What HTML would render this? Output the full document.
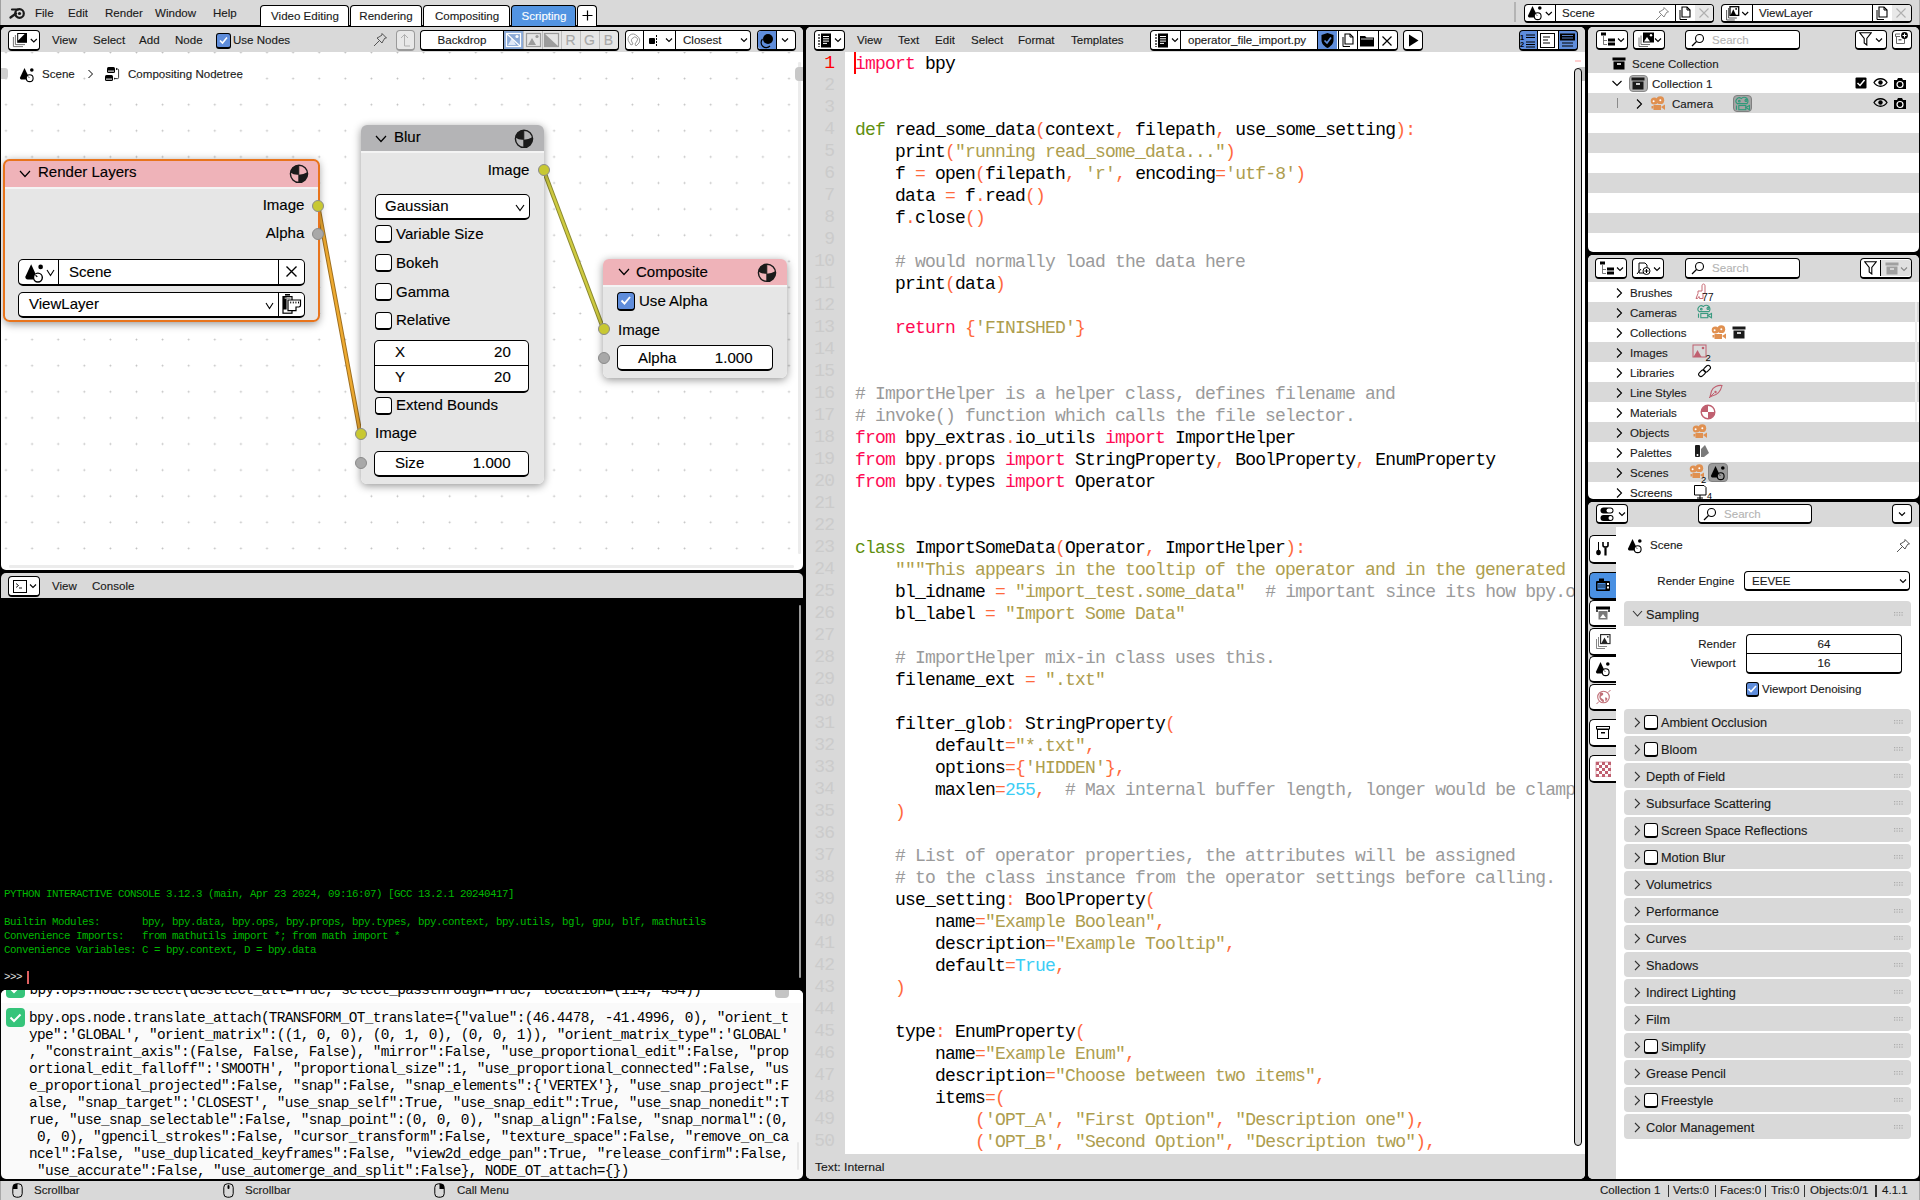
<!DOCTYPE html><html><head><meta charset="utf-8"><style>
html,body{margin:0;padding:0;}
body{width:1920px;height:1200px;position:relative;overflow:hidden;background:#000;font-family:"Liberation Sans",sans-serif;}
</style></head><body>
<div style="position:absolute;left:0px;top:0px;width:1920px;height:25px;background:#d9d9d9;"></div>
<div style="position:absolute;left:0px;top:1181px;width:1920px;height:19px;background:#d9d9d9;"></div>
<div style="position:absolute;left:0px;top:0px;width:1px;height:25px;background:#a0a0a0;"></div>
<svg style="position:absolute;left:9px;top:5px;" width="17" height="15" viewBox="0 0 17 15"><g fill="none" stroke="#1a1a1a" stroke-width="2.2"><circle cx="10.5" cy="8.5" r="4.3"/></g><circle cx="10.5" cy="8.5" r="1.6" fill="#1a1a1a"/><path d="M1.5 12.5 L7 8.5 M3 4.5 L9 4.5" stroke="#1a1a1a" stroke-width="2.2" stroke-linecap="round"/></svg>
<div style="position:absolute;left:35.4px;transform-origin:0 0;transform:scaleX(1.05);top:7.69px;font:11.0px/11.0px 'Liberation Sans',sans-serif;color:#1a1a1a;white-space:pre;-webkit-text-stroke:0.12px #1a1a1a;">File</div>
<div style="position:absolute;left:68.4px;transform-origin:0 0;transform:scaleX(1.05);top:7.69px;font:11.0px/11.0px 'Liberation Sans',sans-serif;color:#1a1a1a;white-space:pre;-webkit-text-stroke:0.12px #1a1a1a;">Edit</div>
<div style="position:absolute;left:104.6px;transform-origin:0 0;transform:scaleX(1.05);top:7.69px;font:11.0px/11.0px 'Liberation Sans',sans-serif;color:#1a1a1a;white-space:pre;-webkit-text-stroke:0.12px #1a1a1a;">Render</div>
<div style="position:absolute;left:155px;transform-origin:0 0;transform:scaleX(1.05);top:7.69px;font:11.0px/11.0px 'Liberation Sans',sans-serif;color:#1a1a1a;white-space:pre;-webkit-text-stroke:0.12px #1a1a1a;">Window</div>
<div style="position:absolute;left:212.5px;transform-origin:0 0;transform:scaleX(1.05);top:7.69px;font:11.0px/11.0px 'Liberation Sans',sans-serif;color:#1a1a1a;white-space:pre;-webkit-text-stroke:0.12px #1a1a1a;">Help</div>
<div style="position:absolute;left:260px;top:5px;width:89px;height:21px;background:#ffffff;box-sizing:border-box;border:1px solid #000;border-bottom:none;border-radius:4px 4px 0 0"></div>
<div style="position:absolute;left:304.5px;transform:translateX(-50%) scaleX(1.05);top:10.89px;font:11.0px/11.0px 'Liberation Sans',sans-serif;color:#1a1a1a;white-space:pre;-webkit-text-stroke:0.12px #1a1a1a;">Video Editing</div>
<div style="position:absolute;left:350px;top:5px;width:72px;height:21px;background:#ffffff;box-sizing:border-box;border:1px solid #000;border-bottom:none;border-radius:4px 4px 0 0"></div>
<div style="position:absolute;left:386.0px;transform:translateX(-50%) scaleX(1.05);top:10.89px;font:11.0px/11.0px 'Liberation Sans',sans-serif;color:#1a1a1a;white-space:pre;-webkit-text-stroke:0.12px #1a1a1a;">Rendering</div>
<div style="position:absolute;left:423px;top:5px;width:87px;height:21px;background:#ffffff;box-sizing:border-box;border:1px solid #000;border-bottom:none;border-radius:4px 4px 0 0"></div>
<div style="position:absolute;left:466.5px;transform:translateX(-50%) scaleX(1.05);top:10.89px;font:11.0px/11.0px 'Liberation Sans',sans-serif;color:#1a1a1a;white-space:pre;-webkit-text-stroke:0.12px #1a1a1a;">Compositing</div>
<div style="position:absolute;left:511px;top:5px;width:65px;height:21px;background:#5294e2;box-sizing:border-box;border:1px solid #000;border-bottom:none;border-radius:4px 4px 0 0"></div>
<div style="position:absolute;left:543.5px;transform:translateX(-50%) scaleX(1.05);top:10.89px;font:11.0px/11.0px 'Liberation Sans',sans-serif;color:#fff;white-space:pre;-webkit-text-stroke:0.12px #fff;">Scripting</div>
<div style="position:absolute;left:577px;top:5px;width:20px;height:21px;background:#ffffff;box-sizing:border-box;border:1px solid #000;border-bottom:none;border-radius:4px 4px 0 0"></div>
<svg style="position:absolute;left:582px;top:10px;" width="11" height="11" viewBox="0 0 11 11"><path d="M5.5 0.5 V10.5 M0.5 5.5 H10.5" stroke="#000" stroke-width="1.2"/></svg>
<div style="position:absolute;left:1514px;top:2px;width:2px;height:20px;background:#b4b4b4;"></div>
<div style="position:absolute;left:1523.5px;top:3.5px;width:190.5px;height:19.5px;background:#fff;box-sizing:border-box;border:1px solid #000;border-bottom-width:2px;border-radius:4px"></div>
<div style="position:absolute;left:1554.5px;top:4.5px;width:1px;height:16.5px;background:#000;"></div>
<div style="position:absolute;left:1674.5px;top:4.5px;width:1px;height:16.5px;background:#000;"></div>
<div style="position:absolute;left:1694.5px;top:4.5px;width:1px;height:16.5px;background:#000;"></div>
<div style="position:absolute;left:1695px;top:4.5px;width:18px;height:16.5px;background:#e8e8e8;border-radius:0 3px 3px 0"></div>
<div style="position:absolute;left:1562.4px;transform-origin:0 0;transform:scaleX(1.05);top:8.19px;font:11.0px/11.0px 'Liberation Sans',sans-serif;color:#1a1a1a;white-space:pre;-webkit-text-stroke:0.12px #1a1a1a;">Scene</div>
<div style="position:absolute;left:1720.5px;top:3.5px;width:191.0px;height:19.5px;background:#fff;box-sizing:border-box;border:1px solid #000;border-bottom-width:2px;border-radius:4px"></div>
<div style="position:absolute;left:1751.5px;top:4.5px;width:1px;height:16.5px;background:#000;"></div>
<div style="position:absolute;left:1871.5px;top:4.5px;width:1px;height:16.5px;background:#000;"></div>
<div style="position:absolute;left:1891.5px;top:4.5px;width:1px;height:16.5px;background:#000;"></div>
<div style="position:absolute;left:1892px;top:4.5px;width:18.5px;height:16.5px;background:#e8e8e8;border-radius:0 3px 3px 0"></div>
<div style="position:absolute;left:1759.3px;transform-origin:0 0;transform:scaleX(1.05);top:8.19px;font:11.0px/11.0px 'Liberation Sans',sans-serif;color:#1a1a1a;white-space:pre;-webkit-text-stroke:0.12px #1a1a1a;">ViewLayer</div>
<svg style="position:absolute;left:1527px;top:4.7px;" width="17.0" height="16.0" viewBox="0 0 17.0 16.0"><g transform="scale(1.0)"><path d="M5.5 1 L1.2 10.2 C0.6 11.6,1.6 12.6,3 12.6 L7 12.6 L8.6 7.6 Z" fill="#000"/><circle cx="12.8" cy="3" r="1.8" fill="#000"/><circle cx="10.7" cy="11.2" r="3.4" fill="#fff" stroke="#000" stroke-width="1.1"/><path d="M10.2 10.7 L8.9 9.4" stroke="#000" stroke-width="0.9"/></g></svg>
<svg style="position:absolute;left:1545px;top:11px;" width="8" height="6" viewBox="0 0 8 6"><path d="M0.8 1 L3.8 4 L6.8 1" fill="none" stroke="#000" stroke-width="1.1"/></svg>
<svg style="position:absolute;left:1655px;top:6px;" width="16" height="15" viewBox="0 0 16 15"><path d="M1 14 L6 9" stroke="#888" stroke-width="1"/><path d="M5 7 L9 11 L10 9 L12 6 L13.5 6 L9 1.5 L9 3 L6 5 L4 6 Z" fill="none" stroke="#888" stroke-width="1"/></svg>
<svg style="position:absolute;left:1677px;top:5.5px;" width="15" height="15" viewBox="0 0 15 15"><path d="M5 1 H10 L13 4 V11 H5 Z" fill="#fff" stroke="#000" stroke-width="1.1"/><path d="M10 1 V4 H13" fill="none" stroke="#000" stroke-width="1"/><path d="M3 4 V13.5 H10" fill="none" stroke="#000" stroke-width="1"/></svg>
<svg style="position:absolute;left:1698px;top:7px;" width="12" height="12" viewBox="0 0 12 12"><path d="M1.5 1.5 L10.5 10.5 M10.5 1.5 L1.5 10.5" stroke="#b0b0b0" stroke-width="1.1"/></svg>
<svg style="position:absolute;left:1724px;top:5px;" width="30" height="17" viewBox="0 0 30 17"><path d="M4.6 3 V13 H12.8 M2.6 5 V15 H10.8" fill="none" stroke="#444" stroke-width="0.9"/><rect x="6" y="1.7" width="8.7" height="8.7" fill="#fff" stroke="#000" stroke-width="1.3"/><path d="M6.6 10 L9.3 4.2 L12 10 Z" fill="#000"/><circle cx="12.1" cy="3.9" r="0.9" fill="#000"/><path d="M18.2 7 L21.2 10 L24.2 7" fill="none" stroke="#000" stroke-width="1.1"/></svg>
<svg style="position:absolute;left:1874px;top:5.5px;" width="15" height="15" viewBox="0 0 15 15"><path d="M5 1 H10 L13 4 V11 H5 Z" fill="#fff" stroke="#000" stroke-width="1.1"/><path d="M10 1 V4 H13" fill="none" stroke="#000" stroke-width="1"/><path d="M3 4 V13.5 H10" fill="none" stroke="#000" stroke-width="1"/></svg>
<svg style="position:absolute;left:1895px;top:7px;" width="12" height="12" viewBox="0 0 12 12"><path d="M1.5 1.5 L10.5 10.5 M10.5 1.5 L1.5 10.5" stroke="#b0b0b0" stroke-width="1.1"/></svg>
<div style="position:absolute;left:1919px;top:0px;width:1px;height:25px;background:#a8a8a8;"></div>
<div style="position:absolute;left:1px;top:27px;width:802px;height:543px;background:#ffffff;border-radius:5px;overflow:hidden"></div>
<svg style="position:absolute;left:0;top:0" width="804" height="570" viewBox="0 0 804 570"><defs><pattern id="gd" width="26.1" height="26.1" patternUnits="userSpaceOnUse" x="-7.05" y="39.45"><path d="M12 13.05 H14.1 M13.05 12 V14.1" stroke="#cdcdcd" stroke-width="0.9"/><rect x="12.55" y="12.55" width="1" height="1" fill="#bdbdbd"/></pattern></defs><rect x="1" y="52" width="802" height="518" fill="url(#gd)"/></svg>
<div style="position:absolute;left:1px;top:27px;width:802px;height:25px;background:#d9d9d9;border-radius:5px 5px 0 0"></div>
<div style="position:absolute;left:8px;top:30px;width:31.5px;height:21px;background:#fff;box-sizing:border-box;border:1px solid #000;border-bottom-width:2px;border-radius:4px;"></div>
<svg style="position:absolute;left:12px;top:32px;" width="17" height="16" viewBox="0 0 17 16"><rect x="5.2" y="1" width="9.8" height="9.8" fill="#000"/><path d="M6.2 2 H12.6 L6.2 8.6 Z" fill="#fff"/><path d="M3.4 3 V12.6 H13 M1.4 5 V14.6 H11" fill="none" stroke="#666" stroke-width="0.9"/></svg>
<svg style="position:absolute;left:29.5px;top:38px;" width="8" height="6" viewBox="0 0 8 6"><path d="M0.8 1 L3.8 4 L6.8 1" fill="none" stroke="#000" stroke-width="1.1"/></svg>
<div style="position:absolute;left:52px;transform-origin:0 0;transform:scaleX(1.05);top:34.69px;font:11.0px/11.0px 'Liberation Sans',sans-serif;color:#1a1a1a;white-space:pre;-webkit-text-stroke:0.12px #1a1a1a;">View</div>
<div style="position:absolute;left:92.5px;transform-origin:0 0;transform:scaleX(1.05);top:34.69px;font:11.0px/11.0px 'Liberation Sans',sans-serif;color:#1a1a1a;white-space:pre;-webkit-text-stroke:0.12px #1a1a1a;">Select</div>
<div style="position:absolute;left:139px;transform-origin:0 0;transform:scaleX(1.05);top:34.69px;font:11.0px/11.0px 'Liberation Sans',sans-serif;color:#1a1a1a;white-space:pre;-webkit-text-stroke:0.12px #1a1a1a;">Add</div>
<div style="position:absolute;left:175px;transform-origin:0 0;transform:scaleX(1.05);top:34.69px;font:11.0px/11.0px 'Liberation Sans',sans-serif;color:#1a1a1a;white-space:pre;-webkit-text-stroke:0.12px #1a1a1a;">Node</div>
<div style="position:absolute;left:216px;top:33px;width:15px;height:16px;background:#5f8ddb;box-sizing:border-box;border:1px solid #000;border-bottom-width:2px;border-radius:3px"></div>
<svg style="position:absolute;left:218px;top:35px;" width="11" height="11" viewBox="0 0 11 11"><path d="M2 5.5 L4.5 8 L9 2.5" fill="none" stroke="#fff" stroke-width="1.6"/></svg>
<div style="position:absolute;left:233px;transform-origin:0 0;transform:scaleX(1.05);top:34.69px;font:11.0px/11.0px 'Liberation Sans',sans-serif;color:#1a1a1a;white-space:pre;-webkit-text-stroke:0.12px #1a1a1a;">Use Nodes</div>
<svg style="position:absolute;left:373px;top:33px;" width="15" height="14" viewBox="0 0 15 14"><path d="M1 13 L6 8" stroke="#555" stroke-width="1"/><path d="M5 6 L9 10 L10 8 L12 5 L13.5 5 L9 0.5 L9 2 L6 4 L4 5 Z" fill="none" stroke="#555" stroke-width="1"/></svg>
<div style="position:absolute;left:395.5px;top:30px;width:19px;height:21px;background:#e8e8e8;box-sizing:border-box;border:1px solid #9a9a9a;border-bottom-width:2px;border-radius:4px"></div>
<svg style="position:absolute;left:399px;top:33px;" width="12" height="15" viewBox="0 0 12 15"><path d="M2 5 L5.5 1.5 L9 5 M5.5 1.5 V13 H11" fill="none" stroke="#b0b0b0" stroke-width="1"/></svg>
<div style="position:absolute;left:420px;top:30px;width:84px;height:21px;background:#fff;box-sizing:border-box;border:1px solid #000;border-bottom-width:2px;border-radius:4px;border-radius:4px 0 0 4px;border-right:none"></div>
<div style="position:absolute;left:462px;transform:translateX(-50%) scaleX(1.05);top:34.69px;font:11.0px/11.0px 'Liberation Sans',sans-serif;color:#1a1a1a;white-space:pre;-webkit-text-stroke:0.12px #1a1a1a;">Backdrop</div>
<div style="position:absolute;left:503px;top:30px;width:116px;height:21px;background:#e6e6e6;box-sizing:border-box;border:1px solid #000;border-bottom-width:2px;border-left:none;border-radius:0 4px 4px 0"></div>
<div style="position:absolute;left:504px;top:31px;width:19px;height:18px;background:#8aa9d6;"></div>
<div style="position:absolute;left:503px;top:31px;width:1px;height:18px;background:#000;"></div>
<div style="position:absolute;left:523px;top:31px;width:1px;height:18px;background:#bdbdbd;"></div>
<div style="position:absolute;left:541.5px;top:31px;width:1px;height:18px;background:#bdbdbd;"></div>
<div style="position:absolute;left:560.5px;top:31px;width:1px;height:18px;background:#bdbdbd;"></div>
<div style="position:absolute;left:580px;top:31px;width:1px;height:18px;background:#bdbdbd;"></div>
<div style="position:absolute;left:599px;top:31px;width:1px;height:18px;background:#bdbdbd;"></div>
<svg style="position:absolute;left:505px;top:32px;" width="17" height="16" viewBox="0 0 17 16"><rect x="1.5" y="1.5" width="14" height="13" fill="none" stroke="#fff" stroke-width="1.2"/><path d="M3 13 L7 6 L11 13 Z" fill="#dfe8f7"/><circle cx="12" cy="4.5" r="1.6" fill="#fff"/><path d="M2 2 L15 14" stroke="#fff" stroke-width="1.2"/></svg>
<svg style="position:absolute;left:525px;top:32px;" width="17" height="16" viewBox="0 0 17 16"><rect x="1.5" y="1.5" width="14" height="13" fill="none" stroke="#9c9c9c" stroke-width="1.2"/><path d="M3 13 L7 6 L11 13 Z" fill="#9c9c9c"/><circle cx="12" cy="4.5" r="1.6" fill="#9c9c9c"/></svg>
<svg style="position:absolute;left:543px;top:32px;" width="17" height="16" viewBox="0 0 17 16"><path d="M1.5 1.5 L15.5 14.5 L1.5 14.5 Z" fill="#9c9c9c"/><rect x="1.5" y="1.5" width="14" height="13" fill="none" stroke="#9c9c9c" stroke-width="1.2"/></svg>
<div style="position:absolute;left:570.5px;transform:translateX(-50%) ;top:33.15px;font:14px/14px 'Liberation Sans',sans-serif;color:#a8a8a8;white-space:pre;-webkit-text-stroke:0.12px #a8a8a8;">R</div>
<div style="position:absolute;left:589.5px;transform:translateX(-50%) ;top:33.15px;font:14px/14px 'Liberation Sans',sans-serif;color:#a8a8a8;white-space:pre;-webkit-text-stroke:0.12px #a8a8a8;">G</div>
<div style="position:absolute;left:608.5px;transform:translateX(-50%) ;top:33.15px;font:14px/14px 'Liberation Sans',sans-serif;color:#a8a8a8;white-space:pre;-webkit-text-stroke:0.12px #a8a8a8;">B</div>
<div style="position:absolute;left:624.5px;top:30px;width:126.0px;height:21px;background:#fff;box-sizing:border-box;border:1px solid #000;border-bottom-width:2px;border-radius:4px;"></div>
<div style="position:absolute;left:643px;top:31px;width:1px;height:18px;background:#000;"></div>
<div style="position:absolute;left:675px;top:31px;width:1px;height:18px;background:#000;"></div>
<svg style="position:absolute;left:627px;top:33px;" width="15" height="15" viewBox="0 0 15 15"><path d="M4 12 L2 9 A5 5 0 0 1 10 3 A5 5 0 0 1 12 10 L9 13 L8 11 L10 8 A2.5 2.5 0 0 0 6 5 A2.5 2.5 0 0 0 5 9 L6 11 Z" fill="none" stroke="#999" stroke-width="1"/></svg>
<svg style="position:absolute;left:648px;top:35px;" width="10" height="12" viewBox="0 0 10 12"><rect x="1" y="3" width="6" height="6" rx="1" fill="#000"/><path d="M8.5 0 V12" stroke="#000" stroke-width="1" stroke-dasharray="2 1"/></svg>
<svg style="position:absolute;left:665px;top:37px;" width="8" height="6" viewBox="0 0 8 6"><path d="M1 1.5 L4 4.5 L7 1.5" fill="none" stroke="#000" stroke-width="1.1"/></svg>
<div style="position:absolute;left:683.3px;transform-origin:0 0;transform:scaleX(1.05);top:35.19px;font:11.0px/11.0px 'Liberation Sans',sans-serif;color:#1a1a1a;white-space:pre;-webkit-text-stroke:0.12px #1a1a1a;">Closest</div>
<svg style="position:absolute;left:740px;top:37px;" width="8" height="6" viewBox="0 0 8 6"><path d="M1 1.5 L4 4.5 L7 1.5" fill="none" stroke="#000" stroke-width="1.1"/></svg>
<div style="position:absolute;left:756.5px;top:30px;width:39.0px;height:21px;background:#fff;box-sizing:border-box;border:1px solid #000;border-bottom-width:2px;border-radius:4px;"></div>
<div style="position:absolute;left:757.5px;top:31px;width:18px;height:18px;background:#5f8ddb;border-radius:3px 0 0 3px"></div>
<div style="position:absolute;left:775.5px;top:31px;width:1px;height:18px;background:#000;"></div>
<svg style="position:absolute;left:758px;top:32px;" width="17" height="17" viewBox="0 0 17 17"><circle cx="10" cy="7" r="5" fill="#000"/><path d="M4.5 7 A5 5 0 1 0 12 14" fill="none" stroke="#000" stroke-width="1.2"/></svg>
<svg style="position:absolute;left:781px;top:37px;" width="8" height="6" viewBox="0 0 8 6"><path d="M1 1.5 L4 4.5 L7 1.5" fill="none" stroke="#000" stroke-width="1.1"/></svg>
<div style="position:absolute;left:1px;top:68px;width:7px;height:11px;background:#d0d0d0;border-radius:0 3px 3px 0"></div>
<svg style="position:absolute;left:19px;top:66.5px;" width="17.0" height="16.0" viewBox="0 0 17.0 16.0"><g transform="scale(1.0)"><path d="M5.5 1 L1.2 10.2 C0.6 11.6,1.6 12.6,3 12.6 L7 12.6 L8.6 7.6 Z" fill="#000"/><circle cx="12.8" cy="3" r="1.8" fill="#000"/><circle cx="10.7" cy="11.2" r="3.4" fill="#fff" stroke="#000" stroke-width="1.1"/><path d="M10.2 10.7 L8.9 9.4" stroke="#000" stroke-width="0.9"/></g></svg>
<div style="position:absolute;left:42px;transform-origin:0 0;transform:scaleX(1.05);top:69.19px;font:11.0px/11.0px 'Liberation Sans',sans-serif;color:#1a1a1a;white-space:pre;-webkit-text-stroke:0.12px #1a1a1a;">Scene</div>
<svg style="position:absolute;left:87px;top:69px;" width="7" height="10" viewBox="0 0 7 10"><path d="M1.5 1 L5.5 5 L1.5 9" fill="none" stroke="#000" stroke-width="1"/></svg>
<svg style="position:absolute;left:104px;top:66px;" width="16" height="16" viewBox="0 0 16 16"><rect x="3" y="0.9" width="8" height="6" rx="1.5" fill="#000"/><rect x="4" y="4.6" width="6" height="1" fill="#fff"/><rect x="1" y="9" width="8" height="6" rx="1.5" fill="#000"/><rect x="2" y="12.6" width="6" height="1" fill="#fff"/><path d="M12.3 3 H13.6 Q14.6 3 14.6 4 V11.5 Q14.6 12.6 13.6 12.6 H10.5" fill="none" stroke="#222" stroke-width="0.9"/><path d="M12 1.8 L13.4 3 L12 4.2 Z M10.2 11.4 L11.6 12.6 L10.2 13.8 Z" fill="#000"/></svg>
<div style="position:absolute;left:128px;transform-origin:0 0;transform:scaleX(1.05);top:69.19px;font:11.0px/11.0px 'Liberation Sans',sans-serif;color:#1a1a1a;white-space:pre;-webkit-text-stroke:0.12px #1a1a1a;">Compositing Nodetree</div>
<div style="position:absolute;left:798.2px;top:62px;width:2.6px;height:492px;background:#ececec;border-radius:1.3px"></div>
<div style="position:absolute;left:795px;top:67px;width:8px;height:14px;background:#c8c8c8;border-radius:4px 0 0 4px"></div>
<div style="position:absolute;left:9.3px;top:565.3px;width:784.4px;height:2.4px;background:#ececec;border-radius:1.2px"></div>
<svg style="position:absolute;left:0px;top:0px;" width="800" height="570" viewBox="0 0 800 570"><path d="M318 205.5 L 360.5 434" fill="none" stroke="#a07020" stroke-width="4.4" stroke-linecap="round"/><path d="M318 205.5 L 360.5 434" fill="none" stroke="#eeaa30" stroke-width="2.4" stroke-linecap="round"/><path d="M543.5 170 L 603.5 329.3" fill="none" stroke="#8c8a30" stroke-width="4.4" stroke-linecap="round"/><path d="M543.5 170 L 603.5 329.3" fill="none" stroke="#cfcb40" stroke-width="2.4" stroke-linecap="round"/></svg>
<div style="position:absolute;left:3.5px;top:159px;width:315.5px;height:162.5px;background:transparent;border-radius:6px;box-shadow:0px 2px 8px rgba(0,0,0,0.42)"></div>
<div style="position:absolute;left:3.5px;top:159px;width:315.5px;height:162.5px;background:#e6e6e6;border-radius:6px;overflow:hidden;box-sizing:border-box"><div style="position:absolute;left:0;top:0;right:0;height:28px;background:#efb3b9"></div><div style="position:absolute;left:0;top:28px;right:0;height:1.6px;background:rgba(255,255,255,0.55)"></div></div>
<div style="position:absolute;left:3.0px;top:158.5px;width:316.5px;height:163.5px;background:transparent;box-sizing:border-box;border:2px solid #e8741c;border-radius:6.5px"></div>
<svg style="position:absolute;left:19px;top:169.5px;" width="12" height="8" viewBox="0 0 12 8"><path d="M1 1 L6.0 6.5 L11 1" fill="none" stroke="#000" stroke-width="1.2"/></svg>
<div style="position:absolute;left:38.3px;transform-origin:0 0;transform:scaleX(1.06);top:165.18px;font:14.2px/14.2px 'Liberation Sans',sans-serif;color:#000;white-space:pre;-webkit-text-stroke:0.12px #000;">Render Layers</div>
<svg style="position:absolute;left:288.5px;top:163.5px;" width="20" height="20" viewBox="0 0 20 20"><circle cx="10" cy="9.8" r="8.6" fill="none" stroke="#1a1a1a" stroke-width="1.4"/><path d="M9.8 1.2 A8.6 8.6 0 0 0 1.3 8.6 Q5 11.2 9.8 10.7 Z" fill="#1a1a1a"/><path d="M9.8 10.7 Q14.5 10.6 18.4 8.3 A8.6 8.6 0 0 1 9.8 18.4 Z" fill="#1a1a1a"/><path d="M9.8 1.2 V18.4" stroke="#1a1a1a" stroke-width="0.9"/></svg>
<div style="position:absolute;right:1616px;transform-origin:100% 0;transform:scaleX(1.06);top:198.48px;font:14.2px/14.2px 'Liberation Sans',sans-serif;color:#000;white-space:pre;-webkit-text-stroke:0.12px #000;">Image</div>
<div style="position:absolute;right:1616px;transform-origin:100% 0;transform:scaleX(1.06);top:226.48px;font:14.2px/14.2px 'Liberation Sans',sans-serif;color:#000;white-space:pre;-webkit-text-stroke:0.12px #000;">Alpha</div>
<svg style="position:absolute;left:311px;top:198.5px;" width="14" height="14" viewBox="0 0 14 14"><circle cx="7" cy="7" r="5.5" fill="#c8c832" stroke="#8a8a8a" stroke-width="1"/></svg>
<svg style="position:absolute;left:311px;top:227px;" width="14" height="14" viewBox="0 0 14 14"><circle cx="7" cy="7" r="5.5" fill="#a8a8a8" stroke="#8a8a8a" stroke-width="1"/></svg>
<div style="position:absolute;left:18.2px;top:259px;width:286.40000000000003px;height:26.5px;background:#fff;box-sizing:border-box;border:1px solid #000;border-bottom-width:2px;border-radius:5px;"></div>
<div style="position:absolute;left:58px;top:260px;width:1.2px;height:23.5px;background:#000;"></div>
<div style="position:absolute;left:278.2px;top:260px;width:1.2px;height:23.5px;background:#000;"></div>
<svg style="position:absolute;left:23.5px;top:263px;" width="22.1" height="20.8" viewBox="0 0 22.1 20.8"><g transform="scale(1.3)"><path d="M5.5 1 L1.2 10.2 C0.6 11.6,1.6 12.6,3 12.6 L7 12.6 L8.6 7.6 Z" fill="#000"/><circle cx="12.8" cy="3" r="1.8" fill="#000"/><circle cx="10.7" cy="11.2" r="3.4" fill="#fff" stroke="#000" stroke-width="1.1"/><path d="M10.2 10.7 L8.9 9.4" stroke="#000" stroke-width="0.9"/></g></svg>
<svg style="position:absolute;left:46px;top:268.5px;" width="9" height="8" viewBox="0 0 9 8"><path d="M1 1 L4.5 6.5 L8 1" fill="none" stroke="#000" stroke-width="1.1"/></svg>
<div style="position:absolute;left:68.6px;transform-origin:0 0;transform:scaleX(1.06);top:264.78px;font:14.2px/14.2px 'Liberation Sans',sans-serif;color:#000;white-space:pre;-webkit-text-stroke:0.12px #000;">Scene</div>
<svg style="position:absolute;left:285px;top:265px;" width="13" height="13" viewBox="0 0 13 13"><path d="M1.5 1.5 L11.5 11.5 M11.5 1.5 L1.5 11.5" stroke="#000" stroke-width="1.4"/></svg>
<div style="position:absolute;left:18.2px;top:292.3px;width:286.40000000000003px;height:25.69999999999999px;background:#fff;box-sizing:border-box;border:1px solid #000;border-bottom-width:2px;border-radius:5px;"></div>
<div style="position:absolute;left:278.2px;top:293.3px;width:1.2px;height:22.7px;background:#000;"></div>
<div style="position:absolute;left:28.7px;transform-origin:0 0;transform:scaleX(1.06);top:297.48px;font:14.2px/14.2px 'Liberation Sans',sans-serif;color:#000;white-space:pre;-webkit-text-stroke:0.12px #000;">ViewLayer</div>
<svg style="position:absolute;left:265px;top:301.5px;" width="9" height="8" viewBox="0 0 9 8"><path d="M1 1 L4.5 6.5 L8 1" fill="none" stroke="#000" stroke-width="1.1"/></svg>
<svg style="position:absolute;left:281px;top:293px;" width="22" height="22" viewBox="0 0 22 22"><rect x="4" y="1" width="5" height="1.6" fill="#000"/><rect x="2" y="3.6" width="9" height="16.6" fill="#fff" stroke="#000" stroke-width="1.2"/><rect x="2" y="4" width="3.6" height="12.5" fill="#000"/><rect x="3.6" y="4.4" width="6" height="1.5" fill="#9a9a9a"/><path d="M7 7 H19.5 V12.3 Q19.5 14 17.8 14 H15 V17.6 H7 Z" fill="#fff" stroke="#000" stroke-width="1.2"/><rect x="9.2" y="8.6" width="1" height="1.8" fill="#000"/><rect x="11.8" y="8.6" width="1" height="1.8" fill="#000"/><rect x="14.4" y="8.6" width="1" height="1.8" fill="#000"/><rect x="17" y="8.6" width="1" height="1.8" fill="#000"/></svg>
<div style="position:absolute;left:361px;top:125px;width:182.79999999999995px;height:358.5px;background:transparent;border-radius:6px;box-shadow:0px 2px 8px rgba(0,0,0,0.42)"></div>
<div style="position:absolute;left:361px;top:125px;width:182.79999999999995px;height:358.5px;background:#e6e6e6;border-radius:6px;overflow:hidden;box-sizing:border-box"><div style="position:absolute;left:0;top:0;right:0;height:26px;background:#b4b4b6"></div><div style="position:absolute;left:0;top:26px;right:0;height:1.6px;background:rgba(255,255,255,0.55)"></div></div>
<svg style="position:absolute;left:375px;top:134.5px;" width="12" height="8" viewBox="0 0 12 8"><path d="M1 1 L6.0 6.5 L11 1" fill="none" stroke="#000" stroke-width="1.2"/></svg>
<div style="position:absolute;left:393.7px;transform-origin:0 0;transform:scaleX(1.06);top:130.18px;font:14.2px/14.2px 'Liberation Sans',sans-serif;color:#000;white-space:pre;-webkit-text-stroke:0.12px #000;">Blur</div>
<svg style="position:absolute;left:514.0px;top:129px;" width="20" height="20" viewBox="0 0 20 20"><circle cx="10" cy="9.8" r="8.6" fill="none" stroke="#1a1a1a" stroke-width="1.4"/><path d="M9.8 1.2 A8.6 8.6 0 0 0 1.3 8.6 Q5 11.2 9.8 10.7 Z" fill="#1a1a1a"/><path d="M9.8 10.7 Q14.5 10.6 18.4 8.3 A8.6 8.6 0 0 1 9.8 18.4 Z" fill="#1a1a1a"/><path d="M9.8 1.2 V18.4" stroke="#1a1a1a" stroke-width="0.9"/></svg>
<div style="position:absolute;right:1391px;transform-origin:100% 0;transform:scaleX(1.06);top:162.58px;font:14.2px/14.2px 'Liberation Sans',sans-serif;color:#000;white-space:pre;-webkit-text-stroke:0.12px #000;">Image</div>
<svg style="position:absolute;left:536.5px;top:163px;" width="14" height="14" viewBox="0 0 14 14"><circle cx="7" cy="7" r="5.5" fill="#c8c832" stroke="#8a8a8a" stroke-width="1"/></svg>
<div style="position:absolute;left:374.5px;top:193.5px;width:155.10000000000002px;height:26.0px;background:#fff;box-sizing:border-box;border:1px solid #000;border-bottom-width:2px;border-radius:5px;"></div>
<div style="position:absolute;left:384.6px;transform-origin:0 0;transform:scaleX(1.06);top:198.58px;font:14.2px/14.2px 'Liberation Sans',sans-serif;color:#000;white-space:pre;-webkit-text-stroke:0.12px #000;">Gaussian</div>
<svg style="position:absolute;left:515px;top:203.5px;" width="10" height="8" viewBox="0 0 10 8"><path d="M1 1 L5.0 6.5 L9 1" fill="none" stroke="#000" stroke-width="1.2"/></svg>
<div style="position:absolute;left:374.5px;top:225px;width:17px;height:18px;background:#fff;box-sizing:border-box;border:1px solid #000;border-bottom-width:2px;border-radius:4px"></div>
<div style="position:absolute;left:396px;transform-origin:0 0;transform:scaleX(1.06);top:226.98px;font:14.2px/14.2px 'Liberation Sans',sans-serif;color:#000;white-space:pre;-webkit-text-stroke:0.12px #000;">Variable Size</div>
<div style="position:absolute;left:374.5px;top:254px;width:17px;height:18px;background:#fff;box-sizing:border-box;border:1px solid #000;border-bottom-width:2px;border-radius:4px"></div>
<div style="position:absolute;left:396px;transform-origin:0 0;transform:scaleX(1.06);top:255.88px;font:14.2px/14.2px 'Liberation Sans',sans-serif;color:#000;white-space:pre;-webkit-text-stroke:0.12px #000;">Bokeh</div>
<div style="position:absolute;left:374.5px;top:283px;width:17px;height:18px;background:#fff;box-sizing:border-box;border:1px solid #000;border-bottom-width:2px;border-radius:4px"></div>
<div style="position:absolute;left:396px;transform-origin:0 0;transform:scaleX(1.06);top:284.73px;font:14.2px/14.2px 'Liberation Sans',sans-serif;color:#000;white-space:pre;-webkit-text-stroke:0.12px #000;">Gamma</div>
<div style="position:absolute;left:374.5px;top:311.5px;width:17px;height:18px;background:#fff;box-sizing:border-box;border:1px solid #000;border-bottom-width:2px;border-radius:4px"></div>
<div style="position:absolute;left:396px;transform-origin:0 0;transform:scaleX(1.06);top:313.48px;font:14.2px/14.2px 'Liberation Sans',sans-serif;color:#000;white-space:pre;-webkit-text-stroke:0.12px #000;">Relative</div>
<div style="position:absolute;left:374.3px;top:340.25px;width:155.2px;height:52.5px;background:#fff;box-sizing:border-box;border:1px solid #000;border-bottom-width:2px;border-radius:5px;"></div>
<div style="position:absolute;left:375.3px;top:365px;width:153.2px;height:1.3px;background:#000;"></div>
<div style="position:absolute;left:395px;transform-origin:0 0;transform:scaleX(1.06);top:345.48px;font:14.2px/14.2px 'Liberation Sans',sans-serif;color:#000;white-space:pre;-webkit-text-stroke:0.12px #000;">X</div>
<div style="position:absolute;right:1409px;transform-origin:100% 0;transform:scaleX(1.06);top:345.48px;font:14.2px/14.2px 'Liberation Sans',sans-serif;color:#000;white-space:pre;-webkit-text-stroke:0.12px #000;">20</div>
<div style="position:absolute;left:395px;transform-origin:0 0;transform:scaleX(1.06);top:370.23px;font:14.2px/14.2px 'Liberation Sans',sans-serif;color:#000;white-space:pre;-webkit-text-stroke:0.12px #000;">Y</div>
<div style="position:absolute;right:1409px;transform-origin:100% 0;transform:scaleX(1.06);top:370.23px;font:14.2px/14.2px 'Liberation Sans',sans-serif;color:#000;white-space:pre;-webkit-text-stroke:0.12px #000;">20</div>
<div style="position:absolute;left:374.5px;top:396.5px;width:17px;height:18px;background:#fff;box-sizing:border-box;border:1px solid #000;border-bottom-width:2px;border-radius:4px"></div>
<div style="position:absolute;left:396px;transform-origin:0 0;transform:scaleX(1.06);top:397.98px;font:14.2px/14.2px 'Liberation Sans',sans-serif;color:#000;white-space:pre;-webkit-text-stroke:0.12px #000;">Extend Bounds</div>
<div style="position:absolute;left:375px;transform-origin:0 0;transform:scaleX(1.06);top:426.48px;font:14.2px/14.2px 'Liberation Sans',sans-serif;color:#000;white-space:pre;-webkit-text-stroke:0.12px #000;">Image</div>
<svg style="position:absolute;left:353.5px;top:427px;" width="14" height="14" viewBox="0 0 14 14"><circle cx="7" cy="7" r="5.5" fill="#c8c832" stroke="#8a8a8a" stroke-width="1"/></svg>
<div style="position:absolute;left:374.3px;top:450.5px;width:155.2px;height:26.25px;background:#fff;box-sizing:border-box;border:1px solid #000;border-bottom-width:2px;border-radius:5px;"></div>
<div style="position:absolute;left:395px;transform-origin:0 0;transform:scaleX(1.06);top:455.73px;font:14.2px/14.2px 'Liberation Sans',sans-serif;color:#000;white-space:pre;-webkit-text-stroke:0.12px #000;">Size</div>
<div style="position:absolute;right:1409px;transform-origin:100% 0;transform:scaleX(1.06);top:455.73px;font:14.2px/14.2px 'Liberation Sans',sans-serif;color:#000;white-space:pre;-webkit-text-stroke:0.12px #000;">1.000</div>
<svg style="position:absolute;left:353.5px;top:455.5px;" width="14" height="14" viewBox="0 0 14 14"><circle cx="7" cy="7" r="5.5" fill="#a8a8a8" stroke="#8a8a8a" stroke-width="1"/></svg>
<div style="position:absolute;left:602.6px;top:258.7px;width:184.60000000000002px;height:119.60000000000002px;background:transparent;border-radius:6px;box-shadow:0px 2px 8px rgba(0,0,0,0.42)"></div>
<div style="position:absolute;left:602.6px;top:258.7px;width:184.60000000000002px;height:119.60000000000002px;background:#e6e6e6;border-radius:6px;overflow:hidden;box-sizing:border-box"><div style="position:absolute;left:0;top:0;right:0;height:26.30000000000001px;background:#efb3b9"></div><div style="position:absolute;left:0;top:26.30000000000001px;right:0;height:1.6px;background:rgba(255,255,255,0.55)"></div></div>
<svg style="position:absolute;left:618px;top:267.5px;" width="12" height="8" viewBox="0 0 12 8"><path d="M1 1 L6.0 6.5 L11 1" fill="none" stroke="#000" stroke-width="1.2"/></svg>
<div style="position:absolute;left:636px;transform-origin:0 0;transform:scaleX(1.06);top:264.88px;font:14.2px/14.2px 'Liberation Sans',sans-serif;color:#000;white-space:pre;-webkit-text-stroke:0.12px #000;">Composite</div>
<svg style="position:absolute;left:756.5px;top:262.5px;" width="20" height="20" viewBox="0 0 20 20"><circle cx="10" cy="9.8" r="8.6" fill="none" stroke="#1a1a1a" stroke-width="1.4"/><path d="M9.8 1.2 A8.6 8.6 0 0 0 1.3 8.6 Q5 11.2 9.8 10.7 Z" fill="#1a1a1a"/><path d="M9.8 10.7 Q14.5 10.6 18.4 8.3 A8.6 8.6 0 0 1 9.8 18.4 Z" fill="#1a1a1a"/><path d="M9.8 1.2 V18.4" stroke="#1a1a1a" stroke-width="0.9"/></svg>
<div style="position:absolute;left:617.2px;top:292.3px;width:17.5px;height:18.5px;background:#5f8ddb;box-sizing:border-box;border:1px solid #000;border-bottom-width:2px;border-radius:4px"></div>
<svg style="position:absolute;left:619.2px;top:294.3px;" width="13.5" height="13.5" viewBox="0 0 13.5 13.5"><path d="M2.5 6.5 L5.5 9.5 L11 3" fill="none" stroke="#fff" stroke-width="1.9"/></svg>
<div style="position:absolute;left:639px;transform-origin:0 0;transform:scaleX(1.06);top:293.98px;font:14.2px/14.2px 'Liberation Sans',sans-serif;color:#000;white-space:pre;-webkit-text-stroke:0.12px #000;">Use Alpha</div>
<div style="position:absolute;left:618px;transform-origin:0 0;transform:scaleX(1.06);top:322.98px;font:14.2px/14.2px 'Liberation Sans',sans-serif;color:#000;white-space:pre;-webkit-text-stroke:0.12px #000;">Image</div>
<svg style="position:absolute;left:596.5px;top:322.3px;" width="14" height="14" viewBox="0 0 14 14"><circle cx="7" cy="7" r="5.5" fill="#c8c832" stroke="#8a8a8a" stroke-width="1"/></svg>
<div style="position:absolute;left:617px;top:345px;width:155.5px;height:26px;background:#fff;box-sizing:border-box;border:1px solid #000;border-bottom-width:2px;border-radius:5px;"></div>
<div style="position:absolute;left:638px;transform-origin:0 0;transform:scaleX(1.06);top:350.78px;font:14.2px/14.2px 'Liberation Sans',sans-serif;color:#000;white-space:pre;-webkit-text-stroke:0.12px #000;">Alpha</div>
<div style="position:absolute;right:1167px;transform-origin:100% 0;transform:scaleX(1.06);top:350.78px;font:14.2px/14.2px 'Liberation Sans',sans-serif;color:#000;white-space:pre;-webkit-text-stroke:0.12px #000;">1.000</div>
<svg style="position:absolute;left:596.5px;top:351px;" width="14" height="14" viewBox="0 0 14 14"><circle cx="7" cy="7" r="5.5" fill="#a8a8a8" stroke="#8a8a8a" stroke-width="1"/></svg>
<div style="position:absolute;left:1px;top:573px;width:802px;height:417px;background:#000;border-radius:5px 5px 0 0"></div>
<div style="position:absolute;left:1px;top:573px;width:802px;height:25px;background:#d9d9d9;border-radius:5px 5px 0 0"></div>
<div style="position:absolute;left:8px;top:576px;width:31.7px;height:21px;background:#fff;box-sizing:border-box;border:1px solid #000;border-bottom-width:2px;border-radius:4px"></div>
<svg style="position:absolute;left:12px;top:579px;" width="16" height="15" viewBox="0 0 16 15"><rect x="1.5" y="1.5" width="13" height="12" fill="none" stroke="#000" stroke-width="1"/><path d="M4 4.5 L6.5 6.5 L4 8.5 M7 9 H10" fill="none" stroke="#000" stroke-width="0.9"/></svg>
<svg style="position:absolute;left:29px;top:583px;" width="8" height="6" viewBox="0 0 8 6"><path d="M1 1.5 L4 4.5 L7 1.5" fill="none" stroke="#000" stroke-width="1.1"/></svg>
<div style="position:absolute;left:52px;transform-origin:0 0;transform:scaleX(1.05);top:580.69px;font:11.0px/11.0px 'Liberation Sans',sans-serif;color:#1a1a1a;white-space:pre;-webkit-text-stroke:0.12px #1a1a1a;">View</div>
<div style="position:absolute;left:92px;transform-origin:0 0;transform:scaleX(1.05);top:580.69px;font:11.0px/11.0px 'Liberation Sans',sans-serif;color:#1a1a1a;white-space:pre;-webkit-text-stroke:0.12px #1a1a1a;">Console</div>
<div style="position:absolute;left:798.5px;top:605px;width:2.5px;height:373px;background:#9a9a9a;border-radius:1.5px"></div>
<div style="position:absolute;left:4px;transform-origin:0 0;top:889.23px;font:10.8px/10.8px 'Liberation Mono',monospace;color:#00b800;white-space:pre;letter-spacing:-0.48px">PYTHON INTERACTIVE CONSOLE 3.12.3 (main, Apr 23 2024, 09:16:07) [GCC 13.2.1 20240417]</div>
<div style="position:absolute;left:4px;transform-origin:0 0;top:917.23px;font:10.8px/10.8px 'Liberation Mono',monospace;color:#00b800;white-space:pre;letter-spacing:-0.48px">Builtin Modules:       bpy, bpy.data, bpy.ops, bpy.props, bpy.types, bpy.context, bpy.utils, bgl, gpu, blf, mathutils</div>
<div style="position:absolute;left:4px;transform-origin:0 0;top:931.23px;font:10.8px/10.8px 'Liberation Mono',monospace;color:#00b800;white-space:pre;letter-spacing:-0.48px">Convenience Imports:   from mathutils import *; from math import *</div>
<div style="position:absolute;left:4px;transform-origin:0 0;top:945.23px;font:10.8px/10.8px 'Liberation Mono',monospace;color:#00b800;white-space:pre;letter-spacing:-0.48px">Convenience Variables: C = bpy.context, D = bpy.data</div>
<div style="position:absolute;left:4px;transform-origin:0 0;top:972.23px;font:10.8px/10.8px 'Liberation Mono',monospace;color:#e0e0e0;white-space:pre;letter-spacing:-0.48px">&gt;&gt;&gt; </div>
<div style="position:absolute;left:27px;top:971px;width:1.5px;height:13px;background:#e06060;"></div>
<div style="position:absolute;left:1px;top:990px;width:802px;height:189px;background:#fafafa;border-radius:5px;overflow:hidden"><div style="position:absolute;left:0;top:0;width:802px;height:13px;background:#fff"></div></div>
<div style="position:absolute;left:1px;top:990px;width:802px;height:13px;overflow:hidden">
<svg style="position:absolute;left:5px;top:-11px" width="19" height="19"><rect x="0" y="0" width="19" height="19" rx="4" fill="#35c47a"/><path d="M4.5 9.5 L8 13 L14.5 6.5" fill="none" stroke="#fff" stroke-width="2"/></svg>
<div style="position:absolute;left:28.5px;top:-7.03px;font:14.4px/14.4px 'Liberation Mono',monospace;letter-spacing:-0.64px;color:#000;white-space:pre">bpy.ops.node.select(deselect_all=True, select_passthrough=True, location=(114, 434))</div>
</div>
<div style="position:absolute;left:775px;top:990px;width:14px;height:8px;background:#c4c4c4;border-radius:0 0 4px 4px"></div>
<svg style="position:absolute;left:6px;top:1008px;" width="19" height="19" viewBox="0 0 19 19"><rect x="0" y="0" width="19" height="19" rx="4" fill="#35c47a"/><path d="M4.5 9.5 L8 13 L14.5 6.5" fill="none" stroke="#fff" stroke-width="2"/></svg>
<div style="position:absolute;left:29px;transform-origin:0 0;top:1010.97px;font:14.4px/14.4px 'Liberation Mono',monospace;color:#000;white-space:pre;letter-spacing:-0.64px">bpy.ops.node.translate_attach(TRANSFORM_OT_translate={"value":(46.4478, -41.4996, 0), "orient_t</div>
<div style="position:absolute;left:29px;transform-origin:0 0;top:1027.97px;font:14.4px/14.4px 'Liberation Mono',monospace;color:#000;white-space:pre;letter-spacing:-0.64px">ype":'GLOBAL', "orient_matrix":((1, 0, 0), (0, 1, 0), (0, 0, 1)), "orient_matrix_type":'GLOBAL'</div>
<div style="position:absolute;left:29px;transform-origin:0 0;top:1044.97px;font:14.4px/14.4px 'Liberation Mono',monospace;color:#000;white-space:pre;letter-spacing:-0.64px">, "constraint_axis":(False, False, False), "mirror":False, "use_proportional_edit":False, "prop</div>
<div style="position:absolute;left:29px;transform-origin:0 0;top:1061.97px;font:14.4px/14.4px 'Liberation Mono',monospace;color:#000;white-space:pre;letter-spacing:-0.64px">ortional_edit_falloff":'SMOOTH', "proportional_size":1, "use_proportional_connected":False, "us</div>
<div style="position:absolute;left:29px;transform-origin:0 0;top:1078.97px;font:14.4px/14.4px 'Liberation Mono',monospace;color:#000;white-space:pre;letter-spacing:-0.64px">e_proportional_projected":False, "snap":False, "snap_elements":{'VERTEX'}, "use_snap_project":F</div>
<div style="position:absolute;left:29px;transform-origin:0 0;top:1095.97px;font:14.4px/14.4px 'Liberation Mono',monospace;color:#000;white-space:pre;letter-spacing:-0.64px">alse, "snap_target":'CLOSEST', "use_snap_self":True, "use_snap_edit":True, "use_snap_nonedit":T</div>
<div style="position:absolute;left:29px;transform-origin:0 0;top:1112.97px;font:14.4px/14.4px 'Liberation Mono',monospace;color:#000;white-space:pre;letter-spacing:-0.64px">rue, "use_snap_selectable":False, "snap_point":(0, 0, 0), "snap_align":False, "snap_normal":(0,</div>
<div style="position:absolute;left:29px;transform-origin:0 0;top:1129.97px;font:14.4px/14.4px 'Liberation Mono',monospace;color:#000;white-space:pre;letter-spacing:-0.64px"> 0, 0), "gpencil_strokes":False, "cursor_transform":False, "texture_space":False, "remove_on_ca</div>
<div style="position:absolute;left:29px;transform-origin:0 0;top:1146.97px;font:14.4px/14.4px 'Liberation Mono',monospace;color:#000;white-space:pre;letter-spacing:-0.64px">ncel":False, "use_duplicated_keyframes":False, "view2d_edge_pan":True, "release_confirm":False,</div>
<div style="position:absolute;left:29px;transform-origin:0 0;top:1163.97px;font:14.4px/14.4px 'Liberation Mono',monospace;color:#000;white-space:pre;letter-spacing:-0.64px"> "use_accurate":False, "use_automerge_and_split":False}, NODE_OT_attach={})</div>
<div style="position:absolute;left:797px;top:1142px;width:2px;height:28px;background:#e8e8e8;border-radius:1px"></div>
<div style="position:absolute;left:806px;top:27px;width:779px;height:1152px;background:#ffffff;border-radius:5px"></div>
<div style="position:absolute;left:806px;top:27px;width:779px;height:25px;background:#d9d9d9;border-radius:5px 5px 0 0"></div>
<div style="position:absolute;left:806px;top:52px;width:39px;height:1102px;background:#d9d9d9;"></div>
<div style="position:absolute;left:806px;top:1153.5px;width:779px;height:25.5px;background:#d9d9d9;border-radius:0 0 5px 5px"></div>
<div style="position:absolute;left:815px;transform-origin:0 0;transform:scaleX(1.085);top:1161.82px;font:11.2px/11.2px 'Liberation Sans',sans-serif;color:#1a1a1a;white-space:pre;-webkit-text-stroke:0.12px #1a1a1a;">Text: Internal</div>
<div style="position:absolute;left:813.5px;top:30px;width:31.0px;height:21px;background:#fff;box-sizing:border-box;border:1px solid #000;border-bottom-width:2px;border-radius:4px;"></div>
<svg style="position:absolute;left:818px;top:33px;" width="14" height="15" viewBox="0 0 14 15"><rect x="3" y="0.5" width="10" height="14" fill="#000"/><path d="M1 1 V14" stroke="#000" stroke-width="1.2" stroke-dasharray="2 1"/><path d="M5 3.5 H11 M5 5.8 H11 M5 8.1 H11 M5 10.4 H9" stroke="#fff" stroke-width="1"/></svg>
<svg style="position:absolute;left:834px;top:37px;" width="8" height="6" viewBox="0 0 8 6"><path d="M1 1.5 L4 4.5 L7 1.5" fill="none" stroke="#000" stroke-width="1.1"/></svg>
<div style="position:absolute;left:857px;transform-origin:0 0;transform:scaleX(1.05);top:34.69px;font:11.0px/11.0px 'Liberation Sans',sans-serif;color:#1a1a1a;white-space:pre;-webkit-text-stroke:0.12px #1a1a1a;">View</div>
<div style="position:absolute;left:897.5px;transform-origin:0 0;transform:scaleX(1.05);top:34.69px;font:11.0px/11.0px 'Liberation Sans',sans-serif;color:#1a1a1a;white-space:pre;-webkit-text-stroke:0.12px #1a1a1a;">Text</div>
<div style="position:absolute;left:935.25px;transform-origin:0 0;transform:scaleX(1.05);top:34.69px;font:11.0px/11.0px 'Liberation Sans',sans-serif;color:#1a1a1a;white-space:pre;-webkit-text-stroke:0.12px #1a1a1a;">Edit</div>
<div style="position:absolute;left:971.25px;transform-origin:0 0;transform:scaleX(1.05);top:34.69px;font:11.0px/11.0px 'Liberation Sans',sans-serif;color:#1a1a1a;white-space:pre;-webkit-text-stroke:0.12px #1a1a1a;">Select</div>
<div style="position:absolute;left:1018px;transform-origin:0 0;transform:scaleX(1.05);top:34.69px;font:11.0px/11.0px 'Liberation Sans',sans-serif;color:#1a1a1a;white-space:pre;-webkit-text-stroke:0.12px #1a1a1a;">Format</div>
<div style="position:absolute;left:1070.5px;transform-origin:0 0;transform:scaleX(1.05);top:34.69px;font:11.0px/11.0px 'Liberation Sans',sans-serif;color:#1a1a1a;white-space:pre;-webkit-text-stroke:0.12px #1a1a1a;">Templates</div>
<div style="position:absolute;left:1149.5px;top:30px;width:248.0px;height:21px;background:#fff;box-sizing:border-box;border:1px solid #000;border-bottom-width:2px;border-radius:4px;"></div>
<div style="position:absolute;left:1180.3px;top:31px;width:1px;height:18px;background:#000;"></div>
<div style="position:absolute;left:1317.3px;top:31px;width:1px;height:18px;background:#000;"></div>
<div style="position:absolute;left:1337.6px;top:31px;width:1px;height:18px;background:#000;"></div>
<div style="position:absolute;left:1357.2px;top:31px;width:1px;height:18px;background:#000;"></div>
<div style="position:absolute;left:1377.5px;top:31px;width:1px;height:18px;background:#000;"></div>
<svg style="position:absolute;left:1155px;top:33px;" width="14" height="15" viewBox="0 0 14 15"><rect x="3" y="0.5" width="10" height="14" fill="#000"/><path d="M1 1 V14" stroke="#000" stroke-width="1.2" stroke-dasharray="2 1"/><path d="M5 3.5 H11 M5 5.8 H11 M5 8.1 H11 M5 10.4 H9" stroke="#fff" stroke-width="1"/></svg>
<svg style="position:absolute;left:1171px;top:37px;" width="8" height="6" viewBox="0 0 8 6"><path d="M1 1.5 L4 4.5 L7 1.5" fill="none" stroke="#000" stroke-width="1.1"/></svg>
<div style="position:absolute;left:1188px;transform-origin:0 0;transform:scaleX(1.05);top:35.19px;font:11.0px/11.0px 'Liberation Sans',sans-serif;color:#1a1a1a;white-space:pre;-webkit-text-stroke:0.12px #1a1a1a;">operator_file_import.py</div>
<div style="position:absolute;left:1318.3px;top:31px;width:19px;height:18px;background:#5f8ddb;"></div>
<svg style="position:absolute;left:1320px;top:32px;" width="15" height="17" viewBox="0 0 15 17"><path d="M7.5 1 L13.5 3 V8 C13.5 12 10.5 14.5 7.5 16 C4.5 14.5 1.5 12 1.5 8 V3 Z" fill="#000"/><path d="M4.5 8.5 L7 11 L11 5.5" fill="none" stroke="#5f8ddb" stroke-width="1.7"/></svg>
<svg style="position:absolute;left:1340px;top:33px;" width="15" height="15" viewBox="0 0 15 15"><path d="M5 1 H10 L13 4 V11 H5 Z" fill="#fff" stroke="#000" stroke-width="1.1"/><path d="M10 1 V4 H13" fill="none" stroke="#000" stroke-width="1"/><path d="M3 4 V13.5 H10" fill="none" stroke="#000" stroke-width="1"/></svg>
<svg style="position:absolute;left:1359px;top:33px;" width="16" height="15" viewBox="0 0 16 15"><path d="M1 3 H6 L7.5 4.5 H15 V13.5 H1 Z" fill="#000"/><path d="M2 6 H14" stroke="#fff" stroke-width="0.8"/></svg>
<svg style="position:absolute;left:1381px;top:35px;" width="12" height="12" viewBox="0 0 12 12"><path d="M1.5 1.5 L10.5 10.5 M10.5 1.5 L1.5 10.5" stroke="#000" stroke-width="1.2"/></svg>
<div style="position:absolute;left:1403px;top:30px;width:20px;height:21px;background:#fff;box-sizing:border-box;border:1px solid #000;border-bottom-width:2px;border-radius:4px;"></div>
<svg style="position:absolute;left:1408px;top:34px;" width="11" height="13" viewBox="0 0 11 13"><path d="M1 0.5 L10.5 6.5 L1 12.5 Z" fill="#000"/></svg>
<div style="position:absolute;left:1518.75px;top:30px;width:58.75px;height:21px;background:#5f8ddb;box-sizing:border-box;border:1px solid #000;border-bottom-width:2px;border-radius:4px;"></div>
<div style="position:absolute;left:1537.5px;top:31px;width:20px;height:18px;background:#fff;"></div>
<div style="position:absolute;left:1537px;top:31px;width:1px;height:18px;background:#000;"></div>
<div style="position:absolute;left:1557.5px;top:31px;width:1px;height:18px;background:#000;"></div>
<svg style="position:absolute;left:1520px;top:33px;" width="17" height="15" viewBox="0 0 17 15"><text x="0" y="7" font-family="Liberation Sans" font-size="7.5" font-weight="bold" fill="#000">1</text><text x="0" y="14" font-family="Liberation Sans" font-size="7.5" font-weight="bold" fill="#000">2</text><path d="M6 2 H15 M6 4.5 H15 M6 9 H15 M6 11.5 H15 M6 14 H15" stroke="#000" stroke-width="1.1"/></svg>
<svg style="position:absolute;left:1539px;top:33px;" width="17" height="15" viewBox="0 0 17 15"><rect x="1.5" y="0.5" width="14" height="14" fill="#fff" stroke="#000" stroke-width="1"/><path d="M4 4 H11 M4 7 H9 M4 10 H11" stroke="#000" stroke-width="1"/></svg>
<svg style="position:absolute;left:1559px;top:33px;" width="17" height="15" viewBox="0 0 17 15"><rect x="1" y="0.5" width="15" height="7" fill="#000"/><path d="M3 2.5 H14 M3 5 H14" stroke="#5f8ddb" stroke-width="0.9"/><path d="M3 10 H14 M3 13 H14" stroke="#000" stroke-width="1.1"/></svg>
<div style="position:absolute;left:846px;top:52px;width:728px;height:1101px;overflow:hidden;font:18px/18px 'Liberation Mono',monospace;letter-spacing:-0.8px;color:#000"><div style="position:absolute;left:9px;top:3.21px;white-space:pre"><span style="color:#ff0a54">import</span> bpy</div><div style="position:absolute;left:9px;top:25.21px;white-space:pre"></div><div style="position:absolute;left:9px;top:47.21px;white-space:pre"></div><div style="position:absolute;left:9px;top:69.21px;white-space:pre"><span style="color:#5f8f0f">def</span> read_some_data<span style="color:#ff6a3d">(</span>context<span style="color:#ff6a3d">,</span> filepath<span style="color:#ff6a3d">,</span> use_some_setting<span style="color:#ff6a3d">)</span><span style="color:#ff6a3d">:</span></div><div style="position:absolute;left:9px;top:91.21px;white-space:pre">    print<span style="color:#ff6a3d">(</span><span style="color:#ad9d4e">"running read_some_data..."</span><span style="color:#ff6a3d">)</span></div><div style="position:absolute;left:9px;top:113.21px;white-space:pre">    f <span style="color:#ff6a3d">=</span> open<span style="color:#ff6a3d">(</span>filepath<span style="color:#ff6a3d">,</span> <span style="color:#ad9d4e">'r'</span><span style="color:#ff6a3d">,</span> encoding<span style="color:#ff6a3d">=</span><span style="color:#ad9d4e">'utf-8'</span><span style="color:#ff6a3d">)</span></div><div style="position:absolute;left:9px;top:135.21px;white-space:pre">    data <span style="color:#ff6a3d">=</span> f<span style="color:#ff6a3d">.</span>read<span style="color:#ff6a3d">(</span><span style="color:#ff6a3d">)</span></div><div style="position:absolute;left:9px;top:157.21px;white-space:pre">    f<span style="color:#ff6a3d">.</span>close<span style="color:#ff6a3d">(</span><span style="color:#ff6a3d">)</span></div><div style="position:absolute;left:9px;top:179.21px;white-space:pre"></div><div style="position:absolute;left:9px;top:201.21px;white-space:pre">    <span style="color:#9a9a9a"># would normally load the data here</span></div><div style="position:absolute;left:9px;top:223.21px;white-space:pre">    print<span style="color:#ff6a3d">(</span>data<span style="color:#ff6a3d">)</span></div><div style="position:absolute;left:9px;top:245.21px;white-space:pre"></div><div style="position:absolute;left:9px;top:267.21px;white-space:pre">    <span style="color:#ff0a54">return</span> <span style="color:#ff6a3d">{</span><span style="color:#ad9d4e">'FINISHED'</span><span style="color:#ff6a3d">}</span></div><div style="position:absolute;left:9px;top:289.21px;white-space:pre"></div><div style="position:absolute;left:9px;top:311.21px;white-space:pre"></div><div style="position:absolute;left:9px;top:333.21px;white-space:pre"><span style="color:#9a9a9a"># ImportHelper is a helper class, defines filename and</span></div><div style="position:absolute;left:9px;top:355.21px;white-space:pre"><span style="color:#9a9a9a"># invoke() function which calls the file selector.</span></div><div style="position:absolute;left:9px;top:377.21px;white-space:pre"><span style="color:#ff0a54">from</span> bpy_extras<span style="color:#ff6a3d">.</span>io_utils <span style="color:#ff0a54">import</span> ImportHelper</div><div style="position:absolute;left:9px;top:399.21px;white-space:pre"><span style="color:#ff0a54">from</span> bpy<span style="color:#ff6a3d">.</span>props <span style="color:#ff0a54">import</span> StringProperty<span style="color:#ff6a3d">,</span> BoolProperty<span style="color:#ff6a3d">,</span> EnumProperty</div><div style="position:absolute;left:9px;top:421.21px;white-space:pre"><span style="color:#ff0a54">from</span> bpy<span style="color:#ff6a3d">.</span>types <span style="color:#ff0a54">import</span> Operator</div><div style="position:absolute;left:9px;top:443.21px;white-space:pre"></div><div style="position:absolute;left:9px;top:465.21px;white-space:pre"></div><div style="position:absolute;left:9px;top:487.21px;white-space:pre"><span style="color:#5f8f0f">class</span> ImportSomeData<span style="color:#ff6a3d">(</span>Operator<span style="color:#ff6a3d">,</span> ImportHelper<span style="color:#ff6a3d">)</span><span style="color:#ff6a3d">:</span></div><div style="position:absolute;left:9px;top:509.21px;white-space:pre">    <span style="color:#ad9d4e">"""This appears in the tooltip of the operator and in the generated docs"""</span></div><div style="position:absolute;left:9px;top:531.21px;white-space:pre">    bl_idname <span style="color:#ff6a3d">=</span> <span style="color:#ad9d4e">"import_test.some_data"</span>  <span style="color:#9a9a9a"># important since its how bpy.ops.import_test.some_data is constructed</span></div><div style="position:absolute;left:9px;top:553.21px;white-space:pre">    bl_label <span style="color:#ff6a3d">=</span> <span style="color:#ad9d4e">"Import Some Data"</span></div><div style="position:absolute;left:9px;top:575.21px;white-space:pre"></div><div style="position:absolute;left:9px;top:597.21px;white-space:pre">    <span style="color:#9a9a9a"># ImportHelper mix-in class uses this.</span></div><div style="position:absolute;left:9px;top:619.21px;white-space:pre">    filename_ext <span style="color:#ff6a3d">=</span> <span style="color:#ad9d4e">".txt"</span></div><div style="position:absolute;left:9px;top:641.21px;white-space:pre"></div><div style="position:absolute;left:9px;top:663.21px;white-space:pre">    filter_glob<span style="color:#ff6a3d">:</span> StringProperty<span style="color:#ff6a3d">(</span></div><div style="position:absolute;left:9px;top:685.21px;white-space:pre">        default<span style="color:#ff6a3d">=</span><span style="color:#ad9d4e">"*.txt"</span><span style="color:#ff6a3d">,</span></div><div style="position:absolute;left:9px;top:707.21px;white-space:pre">        options<span style="color:#ff6a3d">=</span><span style="color:#ff6a3d">{</span><span style="color:#ad9d4e">'HIDDEN'</span><span style="color:#ff6a3d">}</span><span style="color:#ff6a3d">,</span></div><div style="position:absolute;left:9px;top:729.21px;white-space:pre">        maxlen<span style="color:#ff6a3d">=</span><span style="color:#3ccdf5">255</span><span style="color:#ff6a3d">,</span>  <span style="color:#9a9a9a"># Max internal buffer length, longer would be clamped.</span></div><div style="position:absolute;left:9px;top:751.21px;white-space:pre">    <span style="color:#ff6a3d">)</span></div><div style="position:absolute;left:9px;top:773.21px;white-space:pre"></div><div style="position:absolute;left:9px;top:795.21px;white-space:pre">    <span style="color:#9a9a9a"># List of operator properties, the attributes will be assigned</span></div><div style="position:absolute;left:9px;top:817.21px;white-space:pre">    <span style="color:#9a9a9a"># to the class instance from the operator settings before calling.</span></div><div style="position:absolute;left:9px;top:839.21px;white-space:pre">    use_setting<span style="color:#ff6a3d">:</span> BoolProperty<span style="color:#ff6a3d">(</span></div><div style="position:absolute;left:9px;top:861.21px;white-space:pre">        name<span style="color:#ff6a3d">=</span><span style="color:#ad9d4e">"Example Boolean"</span><span style="color:#ff6a3d">,</span></div><div style="position:absolute;left:9px;top:883.21px;white-space:pre">        description<span style="color:#ff6a3d">=</span><span style="color:#ad9d4e">"Example Tooltip"</span><span style="color:#ff6a3d">,</span></div><div style="position:absolute;left:9px;top:905.21px;white-space:pre">        default<span style="color:#ff6a3d">=</span><span style="color:#3ccdf5">True</span><span style="color:#ff6a3d">,</span></div><div style="position:absolute;left:9px;top:927.21px;white-space:pre">    <span style="color:#ff6a3d">)</span></div><div style="position:absolute;left:9px;top:949.21px;white-space:pre"></div><div style="position:absolute;left:9px;top:971.21px;white-space:pre">    type<span style="color:#ff6a3d">:</span> EnumProperty<span style="color:#ff6a3d">(</span></div><div style="position:absolute;left:9px;top:993.21px;white-space:pre">        name<span style="color:#ff6a3d">=</span><span style="color:#ad9d4e">"Example Enum"</span><span style="color:#ff6a3d">,</span></div><div style="position:absolute;left:9px;top:1015.21px;white-space:pre">        description<span style="color:#ff6a3d">=</span><span style="color:#ad9d4e">"Choose between two items"</span><span style="color:#ff6a3d">,</span></div><div style="position:absolute;left:9px;top:1037.21px;white-space:pre">        items<span style="color:#ff6a3d">=</span><span style="color:#ff6a3d">(</span></div><div style="position:absolute;left:9px;top:1059.21px;white-space:pre">            <span style="color:#ff6a3d">(</span><span style="color:#ad9d4e">'OPT_A'</span><span style="color:#ff6a3d">,</span> <span style="color:#ad9d4e">"First Option"</span><span style="color:#ff6a3d">,</span> <span style="color:#ad9d4e">"Description one"</span><span style="color:#ff6a3d">)</span><span style="color:#ff6a3d">,</span></div><div style="position:absolute;left:9px;top:1081.21px;white-space:pre">            <span style="color:#ff6a3d">(</span><span style="color:#ad9d4e">'OPT_B'</span><span style="color:#ff6a3d">,</span> <span style="color:#ad9d4e">"Second Option"</span><span style="color:#ff6a3d">,</span> <span style="color:#ad9d4e">"Description two"</span><span style="color:#ff6a3d">)</span><span style="color:#ff6a3d">,</span></div></div>
<div style="position:absolute;right:1085.7px;transform-origin:100% 0;top:54.21px;font:18px/18px 'Liberation Mono',monospace;color:#ff0000;white-space:pre;letter-spacing:-0.8px">1</div>
<div style="position:absolute;right:1085.7px;transform-origin:100% 0;top:76.21px;font:18px/18px 'Liberation Mono',monospace;color:#cbcbcb;white-space:pre;letter-spacing:-0.8px">2</div>
<div style="position:absolute;right:1085.7px;transform-origin:100% 0;top:98.21px;font:18px/18px 'Liberation Mono',monospace;color:#cbcbcb;white-space:pre;letter-spacing:-0.8px">3</div>
<div style="position:absolute;right:1085.7px;transform-origin:100% 0;top:120.21px;font:18px/18px 'Liberation Mono',monospace;color:#cbcbcb;white-space:pre;letter-spacing:-0.8px">4</div>
<div style="position:absolute;right:1085.7px;transform-origin:100% 0;top:142.21px;font:18px/18px 'Liberation Mono',monospace;color:#cbcbcb;white-space:pre;letter-spacing:-0.8px">5</div>
<div style="position:absolute;right:1085.7px;transform-origin:100% 0;top:164.21px;font:18px/18px 'Liberation Mono',monospace;color:#cbcbcb;white-space:pre;letter-spacing:-0.8px">6</div>
<div style="position:absolute;right:1085.7px;transform-origin:100% 0;top:186.21px;font:18px/18px 'Liberation Mono',monospace;color:#cbcbcb;white-space:pre;letter-spacing:-0.8px">7</div>
<div style="position:absolute;right:1085.7px;transform-origin:100% 0;top:208.21px;font:18px/18px 'Liberation Mono',monospace;color:#cbcbcb;white-space:pre;letter-spacing:-0.8px">8</div>
<div style="position:absolute;right:1085.7px;transform-origin:100% 0;top:230.21px;font:18px/18px 'Liberation Mono',monospace;color:#cbcbcb;white-space:pre;letter-spacing:-0.8px">9</div>
<div style="position:absolute;right:1085.7px;transform-origin:100% 0;top:252.21px;font:18px/18px 'Liberation Mono',monospace;color:#cbcbcb;white-space:pre;letter-spacing:-0.8px">10</div>
<div style="position:absolute;right:1085.7px;transform-origin:100% 0;top:274.21px;font:18px/18px 'Liberation Mono',monospace;color:#cbcbcb;white-space:pre;letter-spacing:-0.8px">11</div>
<div style="position:absolute;right:1085.7px;transform-origin:100% 0;top:296.21px;font:18px/18px 'Liberation Mono',monospace;color:#cbcbcb;white-space:pre;letter-spacing:-0.8px">12</div>
<div style="position:absolute;right:1085.7px;transform-origin:100% 0;top:318.21px;font:18px/18px 'Liberation Mono',monospace;color:#cbcbcb;white-space:pre;letter-spacing:-0.8px">13</div>
<div style="position:absolute;right:1085.7px;transform-origin:100% 0;top:340.21px;font:18px/18px 'Liberation Mono',monospace;color:#cbcbcb;white-space:pre;letter-spacing:-0.8px">14</div>
<div style="position:absolute;right:1085.7px;transform-origin:100% 0;top:362.21px;font:18px/18px 'Liberation Mono',monospace;color:#cbcbcb;white-space:pre;letter-spacing:-0.8px">15</div>
<div style="position:absolute;right:1085.7px;transform-origin:100% 0;top:384.21px;font:18px/18px 'Liberation Mono',monospace;color:#cbcbcb;white-space:pre;letter-spacing:-0.8px">16</div>
<div style="position:absolute;right:1085.7px;transform-origin:100% 0;top:406.21px;font:18px/18px 'Liberation Mono',monospace;color:#cbcbcb;white-space:pre;letter-spacing:-0.8px">17</div>
<div style="position:absolute;right:1085.7px;transform-origin:100% 0;top:428.21px;font:18px/18px 'Liberation Mono',monospace;color:#cbcbcb;white-space:pre;letter-spacing:-0.8px">18</div>
<div style="position:absolute;right:1085.7px;transform-origin:100% 0;top:450.21px;font:18px/18px 'Liberation Mono',monospace;color:#cbcbcb;white-space:pre;letter-spacing:-0.8px">19</div>
<div style="position:absolute;right:1085.7px;transform-origin:100% 0;top:472.21px;font:18px/18px 'Liberation Mono',monospace;color:#cbcbcb;white-space:pre;letter-spacing:-0.8px">20</div>
<div style="position:absolute;right:1085.7px;transform-origin:100% 0;top:494.21px;font:18px/18px 'Liberation Mono',monospace;color:#cbcbcb;white-space:pre;letter-spacing:-0.8px">21</div>
<div style="position:absolute;right:1085.7px;transform-origin:100% 0;top:516.21px;font:18px/18px 'Liberation Mono',monospace;color:#cbcbcb;white-space:pre;letter-spacing:-0.8px">22</div>
<div style="position:absolute;right:1085.7px;transform-origin:100% 0;top:538.21px;font:18px/18px 'Liberation Mono',monospace;color:#cbcbcb;white-space:pre;letter-spacing:-0.8px">23</div>
<div style="position:absolute;right:1085.7px;transform-origin:100% 0;top:560.21px;font:18px/18px 'Liberation Mono',monospace;color:#cbcbcb;white-space:pre;letter-spacing:-0.8px">24</div>
<div style="position:absolute;right:1085.7px;transform-origin:100% 0;top:582.21px;font:18px/18px 'Liberation Mono',monospace;color:#cbcbcb;white-space:pre;letter-spacing:-0.8px">25</div>
<div style="position:absolute;right:1085.7px;transform-origin:100% 0;top:604.21px;font:18px/18px 'Liberation Mono',monospace;color:#cbcbcb;white-space:pre;letter-spacing:-0.8px">26</div>
<div style="position:absolute;right:1085.7px;transform-origin:100% 0;top:626.21px;font:18px/18px 'Liberation Mono',monospace;color:#cbcbcb;white-space:pre;letter-spacing:-0.8px">27</div>
<div style="position:absolute;right:1085.7px;transform-origin:100% 0;top:648.21px;font:18px/18px 'Liberation Mono',monospace;color:#cbcbcb;white-space:pre;letter-spacing:-0.8px">28</div>
<div style="position:absolute;right:1085.7px;transform-origin:100% 0;top:670.21px;font:18px/18px 'Liberation Mono',monospace;color:#cbcbcb;white-space:pre;letter-spacing:-0.8px">29</div>
<div style="position:absolute;right:1085.7px;transform-origin:100% 0;top:692.21px;font:18px/18px 'Liberation Mono',monospace;color:#cbcbcb;white-space:pre;letter-spacing:-0.8px">30</div>
<div style="position:absolute;right:1085.7px;transform-origin:100% 0;top:714.21px;font:18px/18px 'Liberation Mono',monospace;color:#cbcbcb;white-space:pre;letter-spacing:-0.8px">31</div>
<div style="position:absolute;right:1085.7px;transform-origin:100% 0;top:736.21px;font:18px/18px 'Liberation Mono',monospace;color:#cbcbcb;white-space:pre;letter-spacing:-0.8px">32</div>
<div style="position:absolute;right:1085.7px;transform-origin:100% 0;top:758.21px;font:18px/18px 'Liberation Mono',monospace;color:#cbcbcb;white-space:pre;letter-spacing:-0.8px">33</div>
<div style="position:absolute;right:1085.7px;transform-origin:100% 0;top:780.21px;font:18px/18px 'Liberation Mono',monospace;color:#cbcbcb;white-space:pre;letter-spacing:-0.8px">34</div>
<div style="position:absolute;right:1085.7px;transform-origin:100% 0;top:802.21px;font:18px/18px 'Liberation Mono',monospace;color:#cbcbcb;white-space:pre;letter-spacing:-0.8px">35</div>
<div style="position:absolute;right:1085.7px;transform-origin:100% 0;top:824.21px;font:18px/18px 'Liberation Mono',monospace;color:#cbcbcb;white-space:pre;letter-spacing:-0.8px">36</div>
<div style="position:absolute;right:1085.7px;transform-origin:100% 0;top:846.21px;font:18px/18px 'Liberation Mono',monospace;color:#cbcbcb;white-space:pre;letter-spacing:-0.8px">37</div>
<div style="position:absolute;right:1085.7px;transform-origin:100% 0;top:868.21px;font:18px/18px 'Liberation Mono',monospace;color:#cbcbcb;white-space:pre;letter-spacing:-0.8px">38</div>
<div style="position:absolute;right:1085.7px;transform-origin:100% 0;top:890.21px;font:18px/18px 'Liberation Mono',monospace;color:#cbcbcb;white-space:pre;letter-spacing:-0.8px">39</div>
<div style="position:absolute;right:1085.7px;transform-origin:100% 0;top:912.21px;font:18px/18px 'Liberation Mono',monospace;color:#cbcbcb;white-space:pre;letter-spacing:-0.8px">40</div>
<div style="position:absolute;right:1085.7px;transform-origin:100% 0;top:934.21px;font:18px/18px 'Liberation Mono',monospace;color:#cbcbcb;white-space:pre;letter-spacing:-0.8px">41</div>
<div style="position:absolute;right:1085.7px;transform-origin:100% 0;top:956.21px;font:18px/18px 'Liberation Mono',monospace;color:#cbcbcb;white-space:pre;letter-spacing:-0.8px">42</div>
<div style="position:absolute;right:1085.7px;transform-origin:100% 0;top:978.21px;font:18px/18px 'Liberation Mono',monospace;color:#cbcbcb;white-space:pre;letter-spacing:-0.8px">43</div>
<div style="position:absolute;right:1085.7px;transform-origin:100% 0;top:1000.21px;font:18px/18px 'Liberation Mono',monospace;color:#cbcbcb;white-space:pre;letter-spacing:-0.8px">44</div>
<div style="position:absolute;right:1085.7px;transform-origin:100% 0;top:1022.21px;font:18px/18px 'Liberation Mono',monospace;color:#cbcbcb;white-space:pre;letter-spacing:-0.8px">45</div>
<div style="position:absolute;right:1085.7px;transform-origin:100% 0;top:1044.21px;font:18px/18px 'Liberation Mono',monospace;color:#cbcbcb;white-space:pre;letter-spacing:-0.8px">46</div>
<div style="position:absolute;right:1085.7px;transform-origin:100% 0;top:1066.21px;font:18px/18px 'Liberation Mono',monospace;color:#cbcbcb;white-space:pre;letter-spacing:-0.8px">47</div>
<div style="position:absolute;right:1085.7px;transform-origin:100% 0;top:1088.21px;font:18px/18px 'Liberation Mono',monospace;color:#cbcbcb;white-space:pre;letter-spacing:-0.8px">48</div>
<div style="position:absolute;right:1085.7px;transform-origin:100% 0;top:1110.21px;font:18px/18px 'Liberation Mono',monospace;color:#cbcbcb;white-space:pre;letter-spacing:-0.8px">49</div>
<div style="position:absolute;right:1085.7px;transform-origin:100% 0;top:1132.21px;font:18px/18px 'Liberation Mono',monospace;color:#cbcbcb;white-space:pre;letter-spacing:-0.8px">50</div>
<div style="position:absolute;left:854px;top:52px;width:2px;height:22px;background:#ff0000;"></div>
<div style="position:absolute;left:1575px;top:60px;width:6px;height:2px;background:#ffd0d0;"></div>
<div style="position:absolute;left:1577px;top:67px;width:8px;height:14px;background:#c8c8c8;border-radius:4px 0 0 4px"></div>
<div style="position:absolute;left:1574.25px;top:68px;width:7.5px;height:1078px;background:#d8d8d8;box-sizing:border-box;border:1px solid #000;border-radius:4px"></div>
<div style="position:absolute;left:1588px;top:27px;width:331px;height:225px;background:#fff;border-radius:5px"></div>
<div style="position:absolute;left:1588px;top:27px;width:331px;height:25px;background:#d9d9d9;border-radius:5px 5px 0 0"></div>
<div style="position:absolute;left:1588px;top:52px;width:331px;height:20.5px;background:#d9d9d9;"></div>
<div style="position:absolute;left:1588px;top:92.5px;width:331px;height:20px;background:#d9d9d9;"></div>
<div style="position:absolute;left:1588px;top:132.5px;width:331px;height:20px;background:#d9d9d9;"></div>
<div style="position:absolute;left:1588px;top:172.5px;width:331px;height:20px;background:#d9d9d9;"></div>
<div style="position:absolute;left:1588px;top:212.5px;width:331px;height:20px;background:#d9d9d9;"></div>
<div style="position:absolute;left:1596.25px;top:29.5px;width:31.25px;height:20.0px;background:#fff;box-sizing:border-box;border:1px solid #000;border-bottom-width:2px;border-radius:4px;"></div>
<svg style="position:absolute;left:1600px;top:32px;" width="18" height="15" viewBox="0 0 18 15"><rect x="1" y="0.5" width="5" height="3" fill="#000"/><path d="M3.5 4 V12.5 H7 M3.5 8.5 H7" fill="none" stroke="#555" stroke-width="0.8"/><rect x="8" y="6.5" width="7" height="3" fill="#000"/><rect x="8" y="10.5" width="7" height="3" fill="#000"/></svg>
<svg style="position:absolute;left:1617px;top:37px;" width="8" height="6" viewBox="0 0 8 6"><path d="M1 1.5 L4 4.5 L7 1.5" fill="none" stroke="#000" stroke-width="1.1"/></svg>
<div style="position:absolute;left:1633px;top:29.5px;width:31.5px;height:20.0px;background:#fff;box-sizing:border-box;border:1px solid #000;border-bottom-width:2px;border-radius:4px;"></div>
<svg style="position:absolute;left:1637px;top:32px;" width="18" height="15" viewBox="0 0 18 15"><path d="M4 3.5 V12.5 H13 M2 5.5 V14.5 H11" fill="none" stroke="#555" stroke-width="0.8"/><rect x="6" y="0.5" width="11" height="10" fill="#000"/><path d="M7 9.5 L10 5 L13 9.5 Z" fill="#fff"/><circle cx="14" cy="3.2" r="1.2" fill="#fff"/></svg>
<svg style="position:absolute;left:1654px;top:37px;" width="8" height="6" viewBox="0 0 8 6"><path d="M1 1.5 L4 4.5 L7 1.5" fill="none" stroke="#000" stroke-width="1.1"/></svg>
<div style="position:absolute;left:1685px;top:29.5px;width:114.5px;height:20.0px;background:#fff;box-sizing:border-box;border:1px solid #000;border-bottom-width:2px;border-radius:4px;"></div>
<svg style="position:absolute;left:1691px;top:32.5px;" width="14" height="14" viewBox="0 0 14 14"><circle cx="8.5" cy="5.5" r="4" fill="none" stroke="#000" stroke-width="1.1"/><path d="M5.5 8.5 L1 13" stroke="#000" stroke-width="1.2"/></svg>
<div style="position:absolute;left:1711.5px;transform-origin:0 0;transform:scaleX(1.05);top:34.69px;font:11.0px/11.0px 'Liberation Sans',sans-serif;color:#b4b4b4;white-space:pre;-webkit-text-stroke:0.12px #b4b4b4;">Search</div>
<div style="position:absolute;left:1855px;top:29.5px;width:31.75px;height:20.0px;background:#fff;box-sizing:border-box;border:1px solid #000;border-bottom-width:2px;border-radius:4px;"></div>
<svg style="position:absolute;left:1859px;top:32px;" width="13" height="14" viewBox="0 0 13 14"><path d="M0.8 0.8 H12.2 L7.8 6.5 V13 L5.2 11 V6.5 Z" fill="none" stroke="#000" stroke-width="1.1"/></svg>
<svg style="position:absolute;left:1875px;top:37px;" width="8" height="6" viewBox="0 0 8 6"><path d="M1 1.5 L4 4.5 L7 1.5" fill="none" stroke="#000" stroke-width="1.1"/></svg>
<div style="position:absolute;left:1892px;top:29.5px;width:19.75px;height:20.0px;background:#fff;box-sizing:border-box;border:1px solid #000;border-bottom-width:2px;border-radius:4px;"></div>
<svg style="position:absolute;left:1894px;top:32px;" width="16" height="16" viewBox="0 0 16 16"><path d="M6 2 H1.5 V4.5 H6 M2.5 4.5 V11.5 H10.5 V7" fill="none" stroke="#666" stroke-width="1"/><rect x="4.5" y="7" width="3" height="1.5" fill="#666"/><circle cx="10.5" cy="3.5" r="3.4" fill="#000"/><path d="M10.5 1.5 V5.5 M8.5 3.5 H12.5" stroke="#fff" stroke-width="1.1"/></svg>
<svg style="position:absolute;left:1611.5px;top:57px;" width="14" height="13" viewBox="0 0 14 13"><rect x="0.5" y="0.5" width="13" height="3" fill="#000"/><rect x="1.5" y="4.5" width="11" height="8" fill="#000"/><rect x="5" y="6.2" width="4" height="1.6" fill="#fff"/></svg>
<div style="position:absolute;left:1632px;transform-origin:0 0;transform:scaleX(1.05);top:58.69px;font:11.0px/11.0px 'Liberation Sans',sans-serif;color:#1a1a1a;white-space:pre;-webkit-text-stroke:0.12px #1a1a1a;">Scene Collection</div>
<svg style="position:absolute;left:1612px;top:80px;" width="10" height="7" viewBox="0 0 10 7"><path d="M0.5 1 L5 5.5 L9.5 1" fill="none" stroke="#000" stroke-width="1.1"/></svg>
<div style="position:absolute;left:1628.5px;top:74.5px;width:19px;height:17px;background:#b4b4b4;box-sizing:border-box;border:1px solid #8a8a8a;border-radius:4px"></div>
<svg style="position:absolute;left:1631px;top:77px;" width="14" height="13" viewBox="0 0 14 13"><rect x="0.5" y="0.5" width="13" height="3" fill="#1a1a1a"/><rect x="1.5" y="4.5" width="11" height="8" fill="#1a1a1a"/><rect x="5" y="6.2" width="4" height="1.6" fill="#fff"/></svg>
<div style="position:absolute;left:1652px;transform-origin:0 0;transform:scaleX(1.05);top:78.69px;font:11.0px/11.0px 'Liberation Sans',sans-serif;color:#1a1a1a;white-space:pre;-webkit-text-stroke:0.12px #1a1a1a;">Collection 1</div>
<svg style="position:absolute;left:1855px;top:77px;" width="12" height="12" viewBox="0 0 12 12"><rect x="0.5" y="0.5" width="11" height="11" rx="1" fill="#000"/><path d="M2.5 6 L5 8.5 L9.5 3" fill="none" stroke="#fff" stroke-width="1.5"/></svg>
<svg style="position:absolute;left:1872.5px;top:77px;" width="15" height="11" viewBox="0 0 15 11"><path d="M1 5.5 C4 0.5,11 0.5,14 5.5 C11 10.5,4 10.5,1 5.5 Z" fill="none" stroke="#000" stroke-width="1.3"/><circle cx="7.5" cy="5.5" r="2.2" fill="#000"/></svg>
<svg style="position:absolute;left:1893px;top:76.5px;" width="14" height="13" viewBox="0 0 14 13"><path d="M1 3 H4 L5 1 H9 L10 3 H13 V12 H1 Z" fill="#000"/><circle cx="7" cy="7.5" r="3" fill="none" stroke="#fff" stroke-width="1.2"/></svg>
<div style="position:absolute;left:1617px;top:98px;width:1px;height:10px;background:#8a8a8a;"></div>
<svg style="position:absolute;left:1636px;top:98.5px;" width="7" height="10" viewBox="0 0 7 10"><path d="M1 0.5 L5.5 5.0 L1 9.5" fill="none" stroke="#000" stroke-width="1.1"/></svg>
<svg style="position:absolute;left:1650px;top:95.5px;" width="16" height="15" viewBox="0 0 16 15"><circle cx="4.3" cy="5" r="3.6" fill="#e09050"/><circle cx="10.3" cy="4.2" r="3.9" fill="#e09050"/><circle cx="3.6" cy="5.2" r="1" fill="#fff"/><circle cx="10.3" cy="4.2" r="1" fill="#fff"/><rect x="3.5" y="9" width="7.5" height="5" fill="#e09050"/><rect x="1.5" y="10" width="2" height="2.5" fill="#e09050"/><path d="M11 11 L15 8.6 V14 Z" fill="#e09050"/></svg>
<div style="position:absolute;left:1672px;transform-origin:0 0;transform:scaleX(1.05);top:98.69px;font:11.0px/11.0px 'Liberation Sans',sans-serif;color:#1a1a1a;white-space:pre;-webkit-text-stroke:0.12px #1a1a1a;">Camera</div>
<div style="position:absolute;left:1732.5px;top:94.5px;width:19.5px;height:17.5px;background:#a4a4a4;box-sizing:border-box;border:1px solid #808080;border-radius:4px"></div>
<svg style="position:absolute;left:1734.5px;top:96px;" width="16" height="15" viewBox="0 0 16 15"><g fill="none" stroke="#2e9a7a" stroke-width="1.1"><path d="M2.2 7.6 A3.2 3.2 0 0 1 6.3 2.6 A3.6 3.6 0 1 1 12 7.6 Z"/><circle cx="11" cy="4.4" r="1"/><circle cx="4.3" cy="5.2" r="0.8"/><rect x="3.8" y="9.5" width="7" height="4.2"/><path d="M10.8 11.5 L14.5 9.4 V13.8 Z"/></g><path d="M1.5 9.5 V13.8" stroke="#2e9a7a" stroke-width="1.1"/></svg>
<svg style="position:absolute;left:1872.5px;top:97px;" width="15" height="11" viewBox="0 0 15 11"><path d="M1 5.5 C4 0.5,11 0.5,14 5.5 C11 10.5,4 10.5,1 5.5 Z" fill="none" stroke="#000" stroke-width="1.3"/><circle cx="7.5" cy="5.5" r="2.2" fill="#000"/></svg>
<svg style="position:absolute;left:1893px;top:96.5px;" width="14" height="13" viewBox="0 0 14 13"><path d="M1 3 H4 L5 1 H9 L10 3 H13 V12 H1 Z" fill="#000"/><circle cx="7" cy="7.5" r="3" fill="none" stroke="#fff" stroke-width="1.2"/></svg>
<div style="position:absolute;left:1588px;top:255px;width:331px;height:244px;background:#fff;border-radius:5px"></div>
<div style="position:absolute;left:1588px;top:255px;width:331px;height:26.5px;background:#d9d9d9;border-radius:5px 5px 0 0"></div>
<div style="position:absolute;left:1588px;top:281.5px;width:331px;height:217.5px;overflow:hidden;border-radius:0 0 5px 5px">
<div style="position:absolute;left:0;top:20px;width:331px;height:20px;background:#d9d9d9"></div>
<div style="position:absolute;left:0;top:60px;width:331px;height:20px;background:#d9d9d9"></div>
<div style="position:absolute;left:0;top:100px;width:331px;height:20px;background:#d9d9d9"></div>
<div style="position:absolute;left:0;top:140px;width:331px;height:20px;background:#d9d9d9"></div>
<div style="position:absolute;left:0;top:180px;width:331px;height:20px;background:#d9d9d9"></div>
</div>
<div style="position:absolute;left:1595.3px;top:258px;width:31.5px;height:20.5px;background:#fff;box-sizing:border-box;border:1px solid #000;border-bottom-width:2px;border-radius:4px;"></div>
<svg style="position:absolute;left:1599px;top:261px;" width="18" height="15" viewBox="0 0 18 15"><rect x="1" y="0.5" width="5" height="3" fill="#000"/><path d="M3.5 4 V12.5 H7 M3.5 8.5 H7" fill="none" stroke="#555" stroke-width="0.8"/><rect x="8" y="6.5" width="7" height="3" fill="#000"/><rect x="8" y="10.5" width="7" height="3" fill="#000"/></svg>
<svg style="position:absolute;left:1616px;top:265.5px;" width="8" height="6" viewBox="0 0 8 6"><path d="M1 1.5 L4 4.5 L7 1.5" fill="none" stroke="#000" stroke-width="1.1"/></svg>
<div style="position:absolute;left:1632.3px;top:258px;width:31.5px;height:20.5px;background:#fff;box-sizing:border-box;border:1px solid #000;border-bottom-width:2px;border-radius:4px;"></div>
<svg style="position:absolute;left:1636px;top:261px;" width="17" height="15" viewBox="0 0 17 15"><path d="M3 2 H9 L11 4 V12 H3 Z" fill="none" stroke="#000" stroke-width="1"/><circle cx="10.5" cy="10" r="3.5" fill="#fff" stroke="#000" stroke-width="1"/><path d="M10.5 8 V12 M8.5 10 H12.5" stroke="#000" stroke-width="1"/><path d="M1 13 L5 8" stroke="#000" stroke-width="1"/></svg>
<svg style="position:absolute;left:1653px;top:265.5px;" width="8" height="6" viewBox="0 0 8 6"><path d="M1 1.5 L4 4.5 L7 1.5" fill="none" stroke="#000" stroke-width="1.1"/></svg>
<div style="position:absolute;left:1685.4px;top:258px;width:114.19999999999982px;height:20.5px;background:#fff;box-sizing:border-box;border:1px solid #000;border-bottom-width:2px;border-radius:4px;"></div>
<svg style="position:absolute;left:1691.4px;top:261px;" width="14" height="14" viewBox="0 0 14 14"><circle cx="8.5" cy="5.5" r="4" fill="none" stroke="#000" stroke-width="1.1"/><path d="M5.5 8.5 L1 13" stroke="#000" stroke-width="1.2"/></svg>
<div style="position:absolute;left:1711.9px;transform-origin:0 0;transform:scaleX(1.05);top:263.19px;font:11.0px/11.0px 'Liberation Sans',sans-serif;color:#b4b4b4;white-space:pre;-webkit-text-stroke:0.12px #b4b4b4;">Search</div>
<div style="position:absolute;left:1860.4px;top:258px;width:51.34999999999991px;height:20.5px;background:#fff;box-sizing:border-box;border:1px solid #000;border-bottom-width:2px;border-radius:4px;"></div>
<div style="position:absolute;left:1880.5px;top:259.5px;width:30.25px;height:16.5px;background:#e0e0e0;border-radius:0 3px 3px 0"></div>
<div style="position:absolute;left:1880px;top:259.5px;width:1px;height:16.5px;background:#000;"></div>
<svg style="position:absolute;left:1864px;top:261px;" width="13" height="14" viewBox="0 0 13 14"><path d="M0.8 0.8 H12.2 L7.8 6.5 V13 L5.2 11 V6.5 Z" fill="none" stroke="#000" stroke-width="1.1"/></svg>
<svg style="position:absolute;left:1885px;top:262px;" width="14" height="13" viewBox="0 0 14 13"><rect x="0.5" y="0.5" width="13" height="3" fill="#a0a0a0"/><rect x="1.5" y="4.5" width="11" height="8" fill="#a0a0a0"/><rect x="5" y="6.2" width="4" height="1.6" fill="#e0e0e0"/></svg>
<svg style="position:absolute;left:1900px;top:265.5px;" width="8" height="6" viewBox="0 0 8 6"><path d="M1 1.5 L4 4.5 L7 1.5" fill="none" stroke="#888" stroke-width="1.1"/></svg>
<svg style="position:absolute;left:1616px;top:287.5px;" width="7" height="10" viewBox="0 0 7 10"><path d="M1 0.5 L5.5 5.0 L1 9.5" fill="none" stroke="#000" stroke-width="1.1"/></svg>
<div style="position:absolute;left:1630.2px;transform-origin:0 0;transform:scaleX(1.05);top:288.39px;font:11.0px/11.0px 'Liberation Sans',sans-serif;color:#1a1a1a;white-space:pre;-webkit-text-stroke:0.12px #1a1a1a;">Brushes</div>
<svg style="position:absolute;left:1616px;top:307.5px;" width="7" height="10" viewBox="0 0 7 10"><path d="M1 0.5 L5.5 5.0 L1 9.5" fill="none" stroke="#000" stroke-width="1.1"/></svg>
<div style="position:absolute;left:1630.2px;transform-origin:0 0;transform:scaleX(1.05);top:308.39px;font:11.0px/11.0px 'Liberation Sans',sans-serif;color:#1a1a1a;white-space:pre;-webkit-text-stroke:0.12px #1a1a1a;">Cameras</div>
<svg style="position:absolute;left:1616px;top:327.5px;" width="7" height="10" viewBox="0 0 7 10"><path d="M1 0.5 L5.5 5.0 L1 9.5" fill="none" stroke="#000" stroke-width="1.1"/></svg>
<div style="position:absolute;left:1630.2px;transform-origin:0 0;transform:scaleX(1.05);top:328.39px;font:11.0px/11.0px 'Liberation Sans',sans-serif;color:#1a1a1a;white-space:pre;-webkit-text-stroke:0.12px #1a1a1a;">Collections</div>
<svg style="position:absolute;left:1616px;top:347.5px;" width="7" height="10" viewBox="0 0 7 10"><path d="M1 0.5 L5.5 5.0 L1 9.5" fill="none" stroke="#000" stroke-width="1.1"/></svg>
<div style="position:absolute;left:1630.2px;transform-origin:0 0;transform:scaleX(1.05);top:348.39px;font:11.0px/11.0px 'Liberation Sans',sans-serif;color:#1a1a1a;white-space:pre;-webkit-text-stroke:0.12px #1a1a1a;">Images</div>
<svg style="position:absolute;left:1616px;top:367.5px;" width="7" height="10" viewBox="0 0 7 10"><path d="M1 0.5 L5.5 5.0 L1 9.5" fill="none" stroke="#000" stroke-width="1.1"/></svg>
<div style="position:absolute;left:1630.2px;transform-origin:0 0;transform:scaleX(1.05);top:368.39px;font:11.0px/11.0px 'Liberation Sans',sans-serif;color:#1a1a1a;white-space:pre;-webkit-text-stroke:0.12px #1a1a1a;">Libraries</div>
<svg style="position:absolute;left:1616px;top:387.5px;" width="7" height="10" viewBox="0 0 7 10"><path d="M1 0.5 L5.5 5.0 L1 9.5" fill="none" stroke="#000" stroke-width="1.1"/></svg>
<div style="position:absolute;left:1630.2px;transform-origin:0 0;transform:scaleX(1.05);top:388.39px;font:11.0px/11.0px 'Liberation Sans',sans-serif;color:#1a1a1a;white-space:pre;-webkit-text-stroke:0.12px #1a1a1a;">Line Styles</div>
<svg style="position:absolute;left:1616px;top:407.5px;" width="7" height="10" viewBox="0 0 7 10"><path d="M1 0.5 L5.5 5.0 L1 9.5" fill="none" stroke="#000" stroke-width="1.1"/></svg>
<div style="position:absolute;left:1630.2px;transform-origin:0 0;transform:scaleX(1.05);top:408.39px;font:11.0px/11.0px 'Liberation Sans',sans-serif;color:#1a1a1a;white-space:pre;-webkit-text-stroke:0.12px #1a1a1a;">Materials</div>
<svg style="position:absolute;left:1616px;top:427.5px;" width="7" height="10" viewBox="0 0 7 10"><path d="M1 0.5 L5.5 5.0 L1 9.5" fill="none" stroke="#000" stroke-width="1.1"/></svg>
<div style="position:absolute;left:1630.2px;transform-origin:0 0;transform:scaleX(1.05);top:428.39px;font:11.0px/11.0px 'Liberation Sans',sans-serif;color:#1a1a1a;white-space:pre;-webkit-text-stroke:0.12px #1a1a1a;">Objects</div>
<svg style="position:absolute;left:1616px;top:447.5px;" width="7" height="10" viewBox="0 0 7 10"><path d="M1 0.5 L5.5 5.0 L1 9.5" fill="none" stroke="#000" stroke-width="1.1"/></svg>
<div style="position:absolute;left:1630.2px;transform-origin:0 0;transform:scaleX(1.05);top:448.39px;font:11.0px/11.0px 'Liberation Sans',sans-serif;color:#1a1a1a;white-space:pre;-webkit-text-stroke:0.12px #1a1a1a;">Palettes</div>
<svg style="position:absolute;left:1616px;top:467.5px;" width="7" height="10" viewBox="0 0 7 10"><path d="M1 0.5 L5.5 5.0 L1 9.5" fill="none" stroke="#000" stroke-width="1.1"/></svg>
<div style="position:absolute;left:1630.2px;transform-origin:0 0;transform:scaleX(1.05);top:468.39px;font:11.0px/11.0px 'Liberation Sans',sans-serif;color:#1a1a1a;white-space:pre;-webkit-text-stroke:0.12px #1a1a1a;">Scenes</div>
<svg style="position:absolute;left:1616px;top:487.5px;" width="7" height="10" viewBox="0 0 7 10"><path d="M1 0.5 L5.5 5.0 L1 9.5" fill="none" stroke="#000" stroke-width="1.1"/></svg>
<div style="position:absolute;left:1630.2px;transform-origin:0 0;transform:scaleX(1.05);top:488.39px;font:11.0px/11.0px 'Liberation Sans',sans-serif;color:#1a1a1a;white-space:pre;-webkit-text-stroke:0.12px #1a1a1a;">Screens</div>
<svg style="position:absolute;left:1694px;top:283px;" width="24" height="19" viewBox="0 0 24 19"><path d="M9.5 1 C8.5 1,8 1.8,8 3 V8 H4 V10.5 L2 15.5 H3.5 L5 13.5 L5.5 15.5 H9 V10.5 H11 V8 V3 C11 1.8,10.5 1,9.5 1 Z" fill="none" stroke="#c86a74" stroke-width="1"/><text x="8" y="17.5" font-family="Liberation Sans" font-size="10.5" fill="#111">77</text></svg>
<svg style="position:absolute;left:1697px;top:304px;" width="16" height="15" viewBox="0 0 16 15"><g fill="none" stroke="#3a9a80" stroke-width="1.1"><path d="M2.2 7.6 A3.2 3.2 0 0 1 6.3 2.6 A3.6 3.6 0 1 1 12 7.6 Z"/><circle cx="11" cy="4.4" r="1"/><circle cx="4.3" cy="5.2" r="0.8"/><rect x="3.8" y="9.5" width="7" height="4.2"/><path d="M10.8 11.5 L14.5 9.4 V13.8 Z"/></g><path d="M1.5 9.5 V13.8" stroke="#3a9a80" stroke-width="1.1"/></svg>
<svg style="position:absolute;left:1711px;top:325px;" width="16" height="15" viewBox="0 0 16 15"><circle cx="4.3" cy="5" r="3.6" fill="#e09050"/><circle cx="10.3" cy="4.2" r="3.9" fill="#e09050"/><circle cx="3.6" cy="5.2" r="1" fill="#fff"/><circle cx="10.3" cy="4.2" r="1" fill="#fff"/><rect x="3.5" y="9" width="7.5" height="5" fill="#e09050"/><rect x="1.5" y="10" width="2" height="2.5" fill="#e09050"/><path d="M11 11 L15 8.6 V14 Z" fill="#e09050"/></svg>
<svg style="position:absolute;left:1732px;top:326px;" width="14" height="13" viewBox="0 0 14 13"><rect x="0.5" y="0.5" width="13" height="3" fill="#1a1a1a"/><rect x="1.5" y="4.5" width="11" height="8" fill="#1a1a1a"/><rect x="5" y="6.2" width="4" height="1.6" fill="#fff"/></svg>
<svg style="position:absolute;left:1692px;top:344px;" width="22" height="17" viewBox="0 0 22 17"><rect x="1" y="1" width="13" height="12" fill="none" stroke="#c06070" stroke-width="1"/><path d="M1.5 13 L5.5 6 L9.5 13 Z" fill="#c06070"/><circle cx="11" cy="4" r="1.3" fill="#c06070"/><text x="13.5" y="16.5" font-family="Liberation Sans" font-size="9.5" fill="#000">2</text></svg>
<svg style="position:absolute;left:1697px;top:364px;" width="16" height="15" viewBox="0 0 16 15"><g fill="none" stroke="#000" stroke-width="1.1"><rect x="1.2" y="7" width="7.5" height="4.5" rx="2.2" transform="rotate(-45 5 9.2)"/><rect x="6.3" y="2.5" width="7.5" height="4.5" rx="2.2" transform="rotate(-45 10 4.7)"/></g></svg>
<svg style="position:absolute;left:1708px;top:384px;" width="16" height="15" viewBox="0 0 16 15"><path d="M2 13 L3.5 7 C5 3,10 1,14 1.5 C13 6,10 11,4 12 Z" fill="none" stroke="#c06070" stroke-width="1.1"/><circle cx="7.5" cy="8" r="1.2" fill="#c06070"/><path d="M1 14 L6 9" stroke="#c06070" stroke-width="1"/></svg>
<svg style="position:absolute;left:1700px;top:404px;" width="16" height="16" viewBox="0 0 16 16"><circle cx="8" cy="8" r="6.8" fill="#fff" stroke="#c06070" stroke-width="1.4"/><path d="M8 1.2 A6.8 6.8 0 0 0 1.2 8 H8 Z M8 8 H14.8 A6.8 6.8 0 0 1 8 14.8 Z" fill="#c06070"/></svg>
<svg style="position:absolute;left:1692px;top:424px;" width="16" height="15" viewBox="0 0 16 15"><circle cx="4.3" cy="5" r="3.6" fill="#e09050"/><circle cx="10.3" cy="4.2" r="3.9" fill="#e09050"/><circle cx="3.6" cy="5.2" r="1" fill="#fff"/><circle cx="10.3" cy="4.2" r="1" fill="#fff"/><rect x="3.5" y="9" width="7.5" height="5" fill="#e09050"/><rect x="1.5" y="10" width="2" height="2.5" fill="#e09050"/><path d="M11 11 L15 8.6 V14 Z" fill="#e09050"/></svg>
<svg style="position:absolute;left:1694px;top:444px;" width="18" height="16" viewBox="0 0 18 16"><rect x="1" y="1" width="5" height="12" rx="1" fill="#1a1a1a"/><circle cx="3.5" cy="11" r="1" fill="#fff"/><path d="M7 13 V5 L11 1 L15 9 L10 13 Z" fill="#7a7a7a"/></svg>
<svg style="position:absolute;left:1688px;top:463px;" width="40" height="19" viewBox="0 0 40 19"></svg>
<svg style="position:absolute;left:1689px;top:464px;" width="16" height="15" viewBox="0 0 16 15"><circle cx="4.3" cy="5" r="3.6" fill="#e09050"/><circle cx="10.3" cy="4.2" r="3.9" fill="#e09050"/><circle cx="3.6" cy="5.2" r="1" fill="#fff"/><circle cx="10.3" cy="4.2" r="1" fill="#fff"/><rect x="3.5" y="9" width="7.5" height="5" fill="#e09050"/><rect x="1.5" y="10" width="2" height="2.5" fill="#e09050"/><path d="M11 11 L15 8.6 V14 Z" fill="#e09050"/></svg>
<div style="position:absolute;left:1707.5px;top:463px;width:20px;height:19px;background:#9a9a9a;box-sizing:border-box;border:1px solid #808080;border-radius:4px"></div>
<svg style="position:absolute;left:1709.5px;top:465px;" width="17.0" height="16.0" viewBox="0 0 17.0 16.0"><g transform="scale(1.0)"><path d="M5.5 1 L1.2 10.2 C0.6 11.6,1.6 12.6,3 12.6 L7 12.6 L8.6 7.6 Z" fill="#000"/><circle cx="12.8" cy="3" r="1.8" fill="#000"/><circle cx="10.7" cy="11.2" r="3.4" fill="#9a9a9a" stroke="#000" stroke-width="1.1"/><path d="M10.2 10.7 L8.9 9.4" stroke="#000" stroke-width="0.9"/></g></svg>
<svg style="position:absolute;left:1701px;top:474px;" width="8" height="10" viewBox="0 0 8 10"><text x="0" y="9" font-family="Liberation Sans" font-size="9.5" fill="#000">2</text></svg>
<svg style="position:absolute;left:1693px;top:484px;" width="22" height="15" viewBox="0 0 22 15"><path d="M1.5 1.5 H11 L13 3.5 V11 H1.5 Z" fill="none" stroke="#000" stroke-width="1"/><path d="M7 11 V15 M4 14 H10" stroke="#000" stroke-width="1"/><text x="14" y="15" font-family="Liberation Sans" font-size="9" fill="#000">4</text></svg>
<div style="position:absolute;left:1915px;top:302px;width:2px;height:120px;background:#ececec;border-radius:1px"></div>
<div style="position:absolute;left:1588px;top:502px;width:331px;height:677px;background:#fff;border-radius:5px"></div>
<div style="position:absolute;left:1588px;top:502px;width:331px;height:25px;background:#d9d9d9;border-radius:5px 5px 0 0"></div>
<div style="position:absolute;left:1588px;top:527px;width:28px;height:652px;background:#d9d9d9;border-radius:0 0 0 5px"></div>
<div style="position:absolute;left:1596.4px;top:504.4px;width:31.199999999999818px;height:20.0px;background:#fff;box-sizing:border-box;border:1px solid #000;border-bottom-width:2px;border-radius:4px;"></div>
<svg style="position:absolute;left:1600px;top:507px;" width="17" height="15" viewBox="0 0 17 15"><rect x="0.5" y="0.5" width="13" height="6" rx="3" fill="#000"/><rect x="6.5" y="1.5" width="6" height="4" rx="2" fill="#fff"/><rect x="0.5" y="8" width="13" height="6" rx="3" fill="#000"/><rect x="8.5" y="9" width="4" height="4" rx="2" fill="#fff"/></svg>
<svg style="position:absolute;left:1618px;top:511px;" width="8" height="6" viewBox="0 0 8 6"><path d="M1 1.5 L4 4.5 L7 1.5" fill="none" stroke="#000" stroke-width="1.1"/></svg>
<div style="position:absolute;left:1697.6px;top:504.4px;width:114.0px;height:20.0px;background:#fff;box-sizing:border-box;border:1px solid #000;border-bottom-width:2px;border-radius:4px;"></div>
<svg style="position:absolute;left:1703px;top:507px;" width="14" height="14" viewBox="0 0 14 14"><circle cx="8.5" cy="5.5" r="4" fill="none" stroke="#000" stroke-width="1.1"/><path d="M5.5 8.5 L1 13" stroke="#000" stroke-width="1.2"/></svg>
<div style="position:absolute;left:1723.6px;transform-origin:0 0;transform:scaleX(1.05);top:509.19px;font:11.0px/11.0px 'Liberation Sans',sans-serif;color:#b4b4b4;white-space:pre;-webkit-text-stroke:0.12px #b4b4b4;">Search</div>
<div style="position:absolute;left:1892.4px;top:504.4px;width:19.199999999999818px;height:20.0px;background:#fff;box-sizing:border-box;border:1px solid #000;border-bottom-width:2px;border-radius:4px;"></div>
<svg style="position:absolute;left:1898px;top:511px;" width="8" height="6" viewBox="0 0 8 6"><path d="M1 1.5 L4 4.5 L7 1.5" fill="none" stroke="#000" stroke-width="1.1"/></svg>
<div style="position:absolute;left:1589px;top:535px;width:27px;height:28.5px;background:#fff;box-sizing:border-box;border:1px solid #000;border-right:none;border-bottom-width:2px;border-radius:5px 0 0 5px"></div>
<div style="position:absolute;left:1589px;top:571.5px;width:27px;height:28.0px;background:#4a90e2;box-sizing:border-box;border:1px solid #000;border-right:none;border-bottom-width:2px;border-radius:5px 0 0 5px"></div>
<div style="position:absolute;left:1589px;top:600px;width:27px;height:27px;background:#fff;box-sizing:border-box;border:1px solid #000;border-right:none;border-bottom-width:2px;border-radius:5px 0 0 5px"></div>
<div style="position:absolute;left:1589px;top:628px;width:27px;height:27.5px;background:#fff;box-sizing:border-box;border:1px solid #000;border-right:none;border-bottom-width:2px;border-radius:5px 0 0 5px"></div>
<div style="position:absolute;left:1589px;top:656px;width:27px;height:27px;background:#fff;box-sizing:border-box;border:1px solid #000;border-right:none;border-bottom-width:2px;border-radius:5px 0 0 5px"></div>
<div style="position:absolute;left:1589px;top:684px;width:27px;height:27px;background:#fff;box-sizing:border-box;border:1px solid #000;border-right:none;border-bottom-width:2px;border-radius:5px 0 0 5px"></div>
<div style="position:absolute;left:1589px;top:719px;width:27px;height:28px;background:#fff;box-sizing:border-box;border:1px solid #000;border-right:none;border-bottom-width:2px;border-radius:5px 0 0 5px"></div>
<div style="position:absolute;left:1589px;top:755px;width:27px;height:28px;background:#fff;box-sizing:border-box;border:1px solid #000;border-right:none;border-bottom-width:2px;border-radius:5px 0 0 5px"></div>
<svg style="position:absolute;left:1595px;top:541px;" width="16" height="16" viewBox="0 0 16 16"><path d="M3.5 1 V9" stroke="#000" stroke-width="1"/><ellipse cx="3.5" cy="11.5" rx="2.3" ry="2.8" fill="#000"/><path d="M10.5 6.5 V14.5" stroke="#000" stroke-width="2.2"/><path d="M8 1 V4.5 C8 6.5,13 6.5,13 4.5 V1" fill="none" stroke="#000" stroke-width="1.6"/></svg>
<svg style="position:absolute;left:1595px;top:577px;" width="16" height="16" viewBox="0 0 16 16"><rect x="1" y="4" width="14" height="10" rx="1" fill="#000"/><rect x="4" y="1.5" width="5" height="3" fill="#000"/><rect x="2.5" y="6" width="8" height="6.5" fill="#4a90e2"/><path d="M3 8 H10 M3 10 H10" stroke="#000" stroke-width="0.7"/><rect x="12" y="6" width="2" height="2" fill="#fff"/><rect x="12" y="9.5" width="2" height="2" fill="#fff"/></svg>
<svg style="position:absolute;left:1595px;top:605px;" width="16" height="16" viewBox="0 0 16 16"><rect x="1" y="1.5" width="14" height="3" fill="#000"/><path d="M2 4.5 V7 M14 4.5 V7" stroke="#000" stroke-width="1.4"/><rect x="3.5" y="6" width="9" height="8.5" fill="#7a7a7a"/><path d="M5 13 L8 9 L11 13 Z" fill="#fff"/></svg>
<svg style="position:absolute;left:1595px;top:633px;" width="17" height="16" viewBox="0 0 17 16"><path d="M3.5 4 V13.5 H12 M1.5 6 V15.5 H10" fill="none" stroke="#666" stroke-width="0.8"/><rect x="5.6" y="1.6" width="9.4" height="9" fill="#fff" stroke="#222" stroke-width="1.1"/><path d="M6.5 10 L9.5 4.5 L12.5 10 Z" fill="#222"/><circle cx="12.8" cy="3.8" r="0.9" fill="#222"/></svg>
<svg style="position:absolute;left:1595px;top:661px;" width="17.0" height="16.0" viewBox="0 0 17.0 16.0"><g transform="scale(1.0)"><path d="M5.5 1 L1.2 10.2 C0.6 11.6,1.6 12.6,3 12.6 L7 12.6 L8.6 7.6 Z" fill="#000"/><circle cx="12.8" cy="3" r="1.8" fill="#000"/><circle cx="10.7" cy="11.2" r="3.4" fill="#fff" stroke="#000" stroke-width="1.1"/><path d="M10.2 10.7 L8.9 9.4" stroke="#000" stroke-width="0.9"/></g></svg>
<svg style="position:absolute;left:1595px;top:689px;" width="17" height="17" viewBox="0 0 17 17"><circle cx="8.5" cy="8" r="5.8" fill="none" stroke="#c07078" stroke-width="1.1"/><path d="M5 4 C7 3,9 4,8 6 C7 7,5 7,6 9 C7 10,9 10,9 12 L8.5 13.5 C6 12,4.5 10,4.3 8 Z" fill="#c07078"/><path d="M10 8.5 C12 8,13 9.5,12 11 L10.5 12.5 Z" fill="#c07078"/><path d="M1.5 15 L4 12.5 M13 3.5 L15.5 1" stroke="#c07078" stroke-width="1"/></svg>
<svg style="position:absolute;left:1595px;top:725px;" width="16" height="16" viewBox="0 0 16 16"><rect x="1.5" y="1.5" width="13" height="2.5" fill="none" stroke="#000" stroke-width="1"/><rect x="2.5" y="4.5" width="11" height="9" fill="none" stroke="#000" stroke-width="1"/><rect x="6" y="7" width="4" height="1.5" fill="#000"/></svg>
<svg style="position:absolute;left:1595px;top:761px;" width="16" height="16" viewBox="0 0 16 16"><rect x="1" y="1" width="3" height="3" fill="#c06070"/><rect x="1" y="7" width="3" height="3" fill="#c06070"/><rect x="1" y="13" width="3" height="3" fill="#c06070"/><rect x="4" y="4" width="3" height="3" fill="#c06070"/><rect x="4" y="10" width="3" height="3" fill="#c06070"/><rect x="7" y="1" width="3" height="3" fill="#c06070"/><rect x="7" y="7" width="3" height="3" fill="#c06070"/><rect x="7" y="13" width="3" height="3" fill="#c06070"/><rect x="10" y="4" width="3" height="3" fill="#c06070"/><rect x="10" y="10" width="3" height="3" fill="#c06070"/><rect x="13" y="1" width="3" height="3" fill="#c06070"/><rect x="13" y="7" width="3" height="3" fill="#c06070"/><rect x="13" y="13" width="3" height="3" fill="#c06070"/><rect x="1" y="1" width="15" height="15" fill="none" stroke="#c06070" stroke-width="0.6"/></svg>
<svg style="position:absolute;left:1627px;top:538px;" width="17.0" height="16.0" viewBox="0 0 17.0 16.0"><g transform="scale(1.0)"><path d="M5.5 1 L1.2 10.2 C0.6 11.6,1.6 12.6,3 12.6 L7 12.6 L8.6 7.6 Z" fill="#000"/><circle cx="12.8" cy="3" r="1.8" fill="#000"/><circle cx="10.7" cy="11.2" r="3.4" fill="#fff" stroke="#000" stroke-width="1.1"/><path d="M10.2 10.7 L8.9 9.4" stroke="#000" stroke-width="0.9"/></g></svg>
<div style="position:absolute;left:1650px;transform-origin:0 0;transform:scaleX(1.05);top:539.69px;font:11.0px/11.0px 'Liberation Sans',sans-serif;color:#1a1a1a;white-space:pre;-webkit-text-stroke:0.12px #1a1a1a;">Scene</div>
<svg style="position:absolute;left:1896px;top:538px;" width="15" height="15" viewBox="0 0 15 15"><path d="M1 14 L6 9" stroke="#555" stroke-width="1"/><path d="M5 7 L9 11 L10 9 L12 6 L13.5 6 L9 1.5 L9 3 L6 5 L4 6 Z" fill="none" stroke="#555" stroke-width="1"/></svg>
<div style="position:absolute;right:186px;transform-origin:100% 0;transform:scaleX(1.05);top:575.69px;font:11.0px/11.0px 'Liberation Sans',sans-serif;color:#1a1a1a;white-space:pre;-webkit-text-stroke:0.12px #1a1a1a;">Render Engine</div>
<div style="position:absolute;left:1743.6px;top:571.4px;width:166.80000000000018px;height:20.0px;background:#fff;box-sizing:border-box;border:1px solid #000;border-bottom-width:2px;border-radius:4px;"></div>
<div style="position:absolute;left:1751.6px;transform-origin:0 0;transform:scaleX(1.05);top:575.69px;font:11.0px/11.0px 'Liberation Sans',sans-serif;color:#1a1a1a;white-space:pre;-webkit-text-stroke:0.12px #1a1a1a;">EEVEE</div>
<svg style="position:absolute;left:1899px;top:578px;" width="8" height="6" viewBox="0 0 8 6"><path d="M1 1.5 L4 4.5 L7 1.5" fill="none" stroke="#000" stroke-width="1.1"/></svg>
<div style="position:absolute;left:1624px;top:601px;width:287px;height:25px;background:#d9d9d9;border-radius:4px 4px 0 0"></div>
<svg style="position:absolute;left:1632px;top:610px;" width="11" height="8" viewBox="0 0 11 8"><path d="M1 1 L5.5 6 L10 1" fill="none" stroke="#333" stroke-width="1.1"/></svg>
<div style="position:absolute;left:1646.4px;transform-origin:0 0;transform:scaleX(1.06);top:608.84px;font:12.0px/12.0px 'Liberation Sans',sans-serif;color:#1a1a1a;white-space:pre;-webkit-text-stroke:0.12px #1a1a1a;">Sampling</div>
<svg style="position:absolute;left:1893px;top:611px;" width="12" height="6" viewBox="0 0 12 6"><rect x="1.0" y="1.0" width="1.2" height="1.2" fill="#ababab"/><rect x="1.0" y="3.5" width="1.2" height="1.2" fill="#ababab"/><rect x="3.5" y="1.0" width="1.2" height="1.2" fill="#ababab"/><rect x="3.5" y="3.5" width="1.2" height="1.2" fill="#ababab"/><rect x="6.0" y="1.0" width="1.2" height="1.2" fill="#ababab"/><rect x="6.0" y="3.5" width="1.2" height="1.2" fill="#ababab"/><rect x="8.5" y="1.0" width="1.2" height="1.2" fill="#ababab"/><rect x="8.5" y="3.5" width="1.2" height="1.2" fill="#ababab"/></svg>
<div style="position:absolute;right:184.4000000000001px;transform-origin:100% 0;transform:scaleX(1.05);top:638.69px;font:11.0px/11.0px 'Liberation Sans',sans-serif;color:#1a1a1a;white-space:pre;-webkit-text-stroke:0.12px #1a1a1a;">Render</div>
<div style="position:absolute;right:184.4000000000001px;transform-origin:100% 0;transform:scaleX(1.05);top:658.19px;font:11.0px/11.0px 'Liberation Sans',sans-serif;color:#1a1a1a;white-space:pre;-webkit-text-stroke:0.12px #1a1a1a;">Viewport</div>
<div style="position:absolute;left:1745.6px;top:634.4px;width:156.80000000000018px;height:39.60000000000002px;background:#fff;box-sizing:border-box;border:1px solid #000;border-bottom-width:2px;border-radius:4px;"></div>
<div style="position:absolute;left:1746.6px;top:653.2px;width:154.8px;height:1.2px;background:#000;"></div>
<div style="position:absolute;left:1824px;transform:translateX(-50%) scaleX(1.05);top:639.19px;font:11.0px/11.0px 'Liberation Sans',sans-serif;color:#1a1a1a;white-space:pre;-webkit-text-stroke:0.12px #1a1a1a;">64</div>
<div style="position:absolute;left:1824px;transform:translateX(-50%) scaleX(1.05);top:658.19px;font:11.0px/11.0px 'Liberation Sans',sans-serif;color:#1a1a1a;white-space:pre;-webkit-text-stroke:0.12px #1a1a1a;">16</div>
<div style="position:absolute;left:1745.6px;top:682px;width:13.5px;height:15px;background:#5f8ddb;box-sizing:border-box;border:1px solid #000;border-bottom-width:2px;border-radius:3px"></div>
<svg style="position:absolute;left:1747px;top:684px;" width="11" height="10" viewBox="0 0 11 10"><path d="M1.5 5 L4 7.5 L9 2" fill="none" stroke="#fff" stroke-width="1.6"/></svg>
<div style="position:absolute;left:1762px;transform-origin:0 0;transform:scaleX(1.05);top:684.19px;font:11.0px/11.0px 'Liberation Sans',sans-serif;color:#1a1a1a;white-space:pre;-webkit-text-stroke:0.12px #1a1a1a;">Viewport Denoising</div>
<div style="position:absolute;left:1624px;top:709px;width:287px;height:24.5px;background:#d9d9d9;border-radius:4px"></div>
<svg style="position:absolute;left:1634px;top:716.5px;" width="7" height="11" viewBox="0 0 7 11"><path d="M1 1 L5.5 5.5 L1 10" fill="none" stroke="#333" stroke-width="1.1"/></svg>
<div style="position:absolute;left:1644px;top:715px;width:14px;height:15px;background:#fff;box-sizing:border-box;border:1px solid #000;border-bottom-width:2px;border-radius:3px"></div>
<div style="position:absolute;left:1661px;transform-origin:0 0;transform:scaleX(1.06);top:717.34px;font:12.0px/12.0px 'Liberation Sans',sans-serif;color:#1a1a1a;white-space:pre;-webkit-text-stroke:0.12px #1a1a1a;">Ambient Occlusion</div>
<svg style="position:absolute;left:1893px;top:718.5px;" width="12" height="6" viewBox="0 0 12 6"><rect x="1.0" y="1.0" width="1.2" height="1.2" fill="#ababab"/><rect x="1.0" y="3.5" width="1.2" height="1.2" fill="#ababab"/><rect x="3.5" y="1.0" width="1.2" height="1.2" fill="#ababab"/><rect x="3.5" y="3.5" width="1.2" height="1.2" fill="#ababab"/><rect x="6.0" y="1.0" width="1.2" height="1.2" fill="#ababab"/><rect x="6.0" y="3.5" width="1.2" height="1.2" fill="#ababab"/><rect x="8.5" y="1.0" width="1.2" height="1.2" fill="#ababab"/><rect x="8.5" y="3.5" width="1.2" height="1.2" fill="#ababab"/></svg>
<div style="position:absolute;left:1624px;top:736px;width:287px;height:24.5px;background:#d9d9d9;border-radius:4px"></div>
<svg style="position:absolute;left:1634px;top:743.5px;" width="7" height="11" viewBox="0 0 7 11"><path d="M1 1 L5.5 5.5 L1 10" fill="none" stroke="#333" stroke-width="1.1"/></svg>
<div style="position:absolute;left:1644px;top:742px;width:14px;height:15px;background:#fff;box-sizing:border-box;border:1px solid #000;border-bottom-width:2px;border-radius:3px"></div>
<div style="position:absolute;left:1661px;transform-origin:0 0;transform:scaleX(1.06);top:744.34px;font:12.0px/12.0px 'Liberation Sans',sans-serif;color:#1a1a1a;white-space:pre;-webkit-text-stroke:0.12px #1a1a1a;">Bloom</div>
<svg style="position:absolute;left:1893px;top:745.5px;" width="12" height="6" viewBox="0 0 12 6"><rect x="1.0" y="1.0" width="1.2" height="1.2" fill="#ababab"/><rect x="1.0" y="3.5" width="1.2" height="1.2" fill="#ababab"/><rect x="3.5" y="1.0" width="1.2" height="1.2" fill="#ababab"/><rect x="3.5" y="3.5" width="1.2" height="1.2" fill="#ababab"/><rect x="6.0" y="1.0" width="1.2" height="1.2" fill="#ababab"/><rect x="6.0" y="3.5" width="1.2" height="1.2" fill="#ababab"/><rect x="8.5" y="1.0" width="1.2" height="1.2" fill="#ababab"/><rect x="8.5" y="3.5" width="1.2" height="1.2" fill="#ababab"/></svg>
<div style="position:absolute;left:1624px;top:763px;width:287px;height:24.5px;background:#d9d9d9;border-radius:4px"></div>
<svg style="position:absolute;left:1634px;top:770.5px;" width="7" height="11" viewBox="0 0 7 11"><path d="M1 1 L5.5 5.5 L1 10" fill="none" stroke="#333" stroke-width="1.1"/></svg>
<div style="position:absolute;left:1646px;transform-origin:0 0;transform:scaleX(1.06);top:771.34px;font:12.0px/12.0px 'Liberation Sans',sans-serif;color:#1a1a1a;white-space:pre;-webkit-text-stroke:0.12px #1a1a1a;">Depth of Field</div>
<svg style="position:absolute;left:1893px;top:772.5px;" width="12" height="6" viewBox="0 0 12 6"><rect x="1.0" y="1.0" width="1.2" height="1.2" fill="#ababab"/><rect x="1.0" y="3.5" width="1.2" height="1.2" fill="#ababab"/><rect x="3.5" y="1.0" width="1.2" height="1.2" fill="#ababab"/><rect x="3.5" y="3.5" width="1.2" height="1.2" fill="#ababab"/><rect x="6.0" y="1.0" width="1.2" height="1.2" fill="#ababab"/><rect x="6.0" y="3.5" width="1.2" height="1.2" fill="#ababab"/><rect x="8.5" y="1.0" width="1.2" height="1.2" fill="#ababab"/><rect x="8.5" y="3.5" width="1.2" height="1.2" fill="#ababab"/></svg>
<div style="position:absolute;left:1624px;top:790px;width:287px;height:24.5px;background:#d9d9d9;border-radius:4px"></div>
<svg style="position:absolute;left:1634px;top:797.5px;" width="7" height="11" viewBox="0 0 7 11"><path d="M1 1 L5.5 5.5 L1 10" fill="none" stroke="#333" stroke-width="1.1"/></svg>
<div style="position:absolute;left:1646px;transform-origin:0 0;transform:scaleX(1.06);top:798.34px;font:12.0px/12.0px 'Liberation Sans',sans-serif;color:#1a1a1a;white-space:pre;-webkit-text-stroke:0.12px #1a1a1a;">Subsurface Scattering</div>
<svg style="position:absolute;left:1893px;top:799.5px;" width="12" height="6" viewBox="0 0 12 6"><rect x="1.0" y="1.0" width="1.2" height="1.2" fill="#ababab"/><rect x="1.0" y="3.5" width="1.2" height="1.2" fill="#ababab"/><rect x="3.5" y="1.0" width="1.2" height="1.2" fill="#ababab"/><rect x="3.5" y="3.5" width="1.2" height="1.2" fill="#ababab"/><rect x="6.0" y="1.0" width="1.2" height="1.2" fill="#ababab"/><rect x="6.0" y="3.5" width="1.2" height="1.2" fill="#ababab"/><rect x="8.5" y="1.0" width="1.2" height="1.2" fill="#ababab"/><rect x="8.5" y="3.5" width="1.2" height="1.2" fill="#ababab"/></svg>
<div style="position:absolute;left:1624px;top:817px;width:287px;height:24.5px;background:#d9d9d9;border-radius:4px"></div>
<svg style="position:absolute;left:1634px;top:824.5px;" width="7" height="11" viewBox="0 0 7 11"><path d="M1 1 L5.5 5.5 L1 10" fill="none" stroke="#333" stroke-width="1.1"/></svg>
<div style="position:absolute;left:1644px;top:823px;width:14px;height:15px;background:#fff;box-sizing:border-box;border:1px solid #000;border-bottom-width:2px;border-radius:3px"></div>
<div style="position:absolute;left:1661px;transform-origin:0 0;transform:scaleX(1.06);top:825.34px;font:12.0px/12.0px 'Liberation Sans',sans-serif;color:#1a1a1a;white-space:pre;-webkit-text-stroke:0.12px #1a1a1a;">Screen Space Reflections</div>
<svg style="position:absolute;left:1893px;top:826.5px;" width="12" height="6" viewBox="0 0 12 6"><rect x="1.0" y="1.0" width="1.2" height="1.2" fill="#ababab"/><rect x="1.0" y="3.5" width="1.2" height="1.2" fill="#ababab"/><rect x="3.5" y="1.0" width="1.2" height="1.2" fill="#ababab"/><rect x="3.5" y="3.5" width="1.2" height="1.2" fill="#ababab"/><rect x="6.0" y="1.0" width="1.2" height="1.2" fill="#ababab"/><rect x="6.0" y="3.5" width="1.2" height="1.2" fill="#ababab"/><rect x="8.5" y="1.0" width="1.2" height="1.2" fill="#ababab"/><rect x="8.5" y="3.5" width="1.2" height="1.2" fill="#ababab"/></svg>
<div style="position:absolute;left:1624px;top:844px;width:287px;height:24.5px;background:#d9d9d9;border-radius:4px"></div>
<svg style="position:absolute;left:1634px;top:851.5px;" width="7" height="11" viewBox="0 0 7 11"><path d="M1 1 L5.5 5.5 L1 10" fill="none" stroke="#333" stroke-width="1.1"/></svg>
<div style="position:absolute;left:1644px;top:850px;width:14px;height:15px;background:#fff;box-sizing:border-box;border:1px solid #000;border-bottom-width:2px;border-radius:3px"></div>
<div style="position:absolute;left:1661px;transform-origin:0 0;transform:scaleX(1.06);top:852.34px;font:12.0px/12.0px 'Liberation Sans',sans-serif;color:#1a1a1a;white-space:pre;-webkit-text-stroke:0.12px #1a1a1a;">Motion Blur</div>
<svg style="position:absolute;left:1893px;top:853.5px;" width="12" height="6" viewBox="0 0 12 6"><rect x="1.0" y="1.0" width="1.2" height="1.2" fill="#ababab"/><rect x="1.0" y="3.5" width="1.2" height="1.2" fill="#ababab"/><rect x="3.5" y="1.0" width="1.2" height="1.2" fill="#ababab"/><rect x="3.5" y="3.5" width="1.2" height="1.2" fill="#ababab"/><rect x="6.0" y="1.0" width="1.2" height="1.2" fill="#ababab"/><rect x="6.0" y="3.5" width="1.2" height="1.2" fill="#ababab"/><rect x="8.5" y="1.0" width="1.2" height="1.2" fill="#ababab"/><rect x="8.5" y="3.5" width="1.2" height="1.2" fill="#ababab"/></svg>
<div style="position:absolute;left:1624px;top:871px;width:287px;height:24.5px;background:#d9d9d9;border-radius:4px"></div>
<svg style="position:absolute;left:1634px;top:878.5px;" width="7" height="11" viewBox="0 0 7 11"><path d="M1 1 L5.5 5.5 L1 10" fill="none" stroke="#333" stroke-width="1.1"/></svg>
<div style="position:absolute;left:1646px;transform-origin:0 0;transform:scaleX(1.06);top:879.34px;font:12.0px/12.0px 'Liberation Sans',sans-serif;color:#1a1a1a;white-space:pre;-webkit-text-stroke:0.12px #1a1a1a;">Volumetrics</div>
<svg style="position:absolute;left:1893px;top:880.5px;" width="12" height="6" viewBox="0 0 12 6"><rect x="1.0" y="1.0" width="1.2" height="1.2" fill="#ababab"/><rect x="1.0" y="3.5" width="1.2" height="1.2" fill="#ababab"/><rect x="3.5" y="1.0" width="1.2" height="1.2" fill="#ababab"/><rect x="3.5" y="3.5" width="1.2" height="1.2" fill="#ababab"/><rect x="6.0" y="1.0" width="1.2" height="1.2" fill="#ababab"/><rect x="6.0" y="3.5" width="1.2" height="1.2" fill="#ababab"/><rect x="8.5" y="1.0" width="1.2" height="1.2" fill="#ababab"/><rect x="8.5" y="3.5" width="1.2" height="1.2" fill="#ababab"/></svg>
<div style="position:absolute;left:1624px;top:898px;width:287px;height:24.5px;background:#d9d9d9;border-radius:4px"></div>
<svg style="position:absolute;left:1634px;top:905.5px;" width="7" height="11" viewBox="0 0 7 11"><path d="M1 1 L5.5 5.5 L1 10" fill="none" stroke="#333" stroke-width="1.1"/></svg>
<div style="position:absolute;left:1646px;transform-origin:0 0;transform:scaleX(1.06);top:906.34px;font:12.0px/12.0px 'Liberation Sans',sans-serif;color:#1a1a1a;white-space:pre;-webkit-text-stroke:0.12px #1a1a1a;">Performance</div>
<svg style="position:absolute;left:1893px;top:907.5px;" width="12" height="6" viewBox="0 0 12 6"><rect x="1.0" y="1.0" width="1.2" height="1.2" fill="#ababab"/><rect x="1.0" y="3.5" width="1.2" height="1.2" fill="#ababab"/><rect x="3.5" y="1.0" width="1.2" height="1.2" fill="#ababab"/><rect x="3.5" y="3.5" width="1.2" height="1.2" fill="#ababab"/><rect x="6.0" y="1.0" width="1.2" height="1.2" fill="#ababab"/><rect x="6.0" y="3.5" width="1.2" height="1.2" fill="#ababab"/><rect x="8.5" y="1.0" width="1.2" height="1.2" fill="#ababab"/><rect x="8.5" y="3.5" width="1.2" height="1.2" fill="#ababab"/></svg>
<div style="position:absolute;left:1624px;top:925px;width:287px;height:24.5px;background:#d9d9d9;border-radius:4px"></div>
<svg style="position:absolute;left:1634px;top:932.5px;" width="7" height="11" viewBox="0 0 7 11"><path d="M1 1 L5.5 5.5 L1 10" fill="none" stroke="#333" stroke-width="1.1"/></svg>
<div style="position:absolute;left:1646px;transform-origin:0 0;transform:scaleX(1.06);top:933.34px;font:12.0px/12.0px 'Liberation Sans',sans-serif;color:#1a1a1a;white-space:pre;-webkit-text-stroke:0.12px #1a1a1a;">Curves</div>
<svg style="position:absolute;left:1893px;top:934.5px;" width="12" height="6" viewBox="0 0 12 6"><rect x="1.0" y="1.0" width="1.2" height="1.2" fill="#ababab"/><rect x="1.0" y="3.5" width="1.2" height="1.2" fill="#ababab"/><rect x="3.5" y="1.0" width="1.2" height="1.2" fill="#ababab"/><rect x="3.5" y="3.5" width="1.2" height="1.2" fill="#ababab"/><rect x="6.0" y="1.0" width="1.2" height="1.2" fill="#ababab"/><rect x="6.0" y="3.5" width="1.2" height="1.2" fill="#ababab"/><rect x="8.5" y="1.0" width="1.2" height="1.2" fill="#ababab"/><rect x="8.5" y="3.5" width="1.2" height="1.2" fill="#ababab"/></svg>
<div style="position:absolute;left:1624px;top:952px;width:287px;height:24.5px;background:#d9d9d9;border-radius:4px"></div>
<svg style="position:absolute;left:1634px;top:959.5px;" width="7" height="11" viewBox="0 0 7 11"><path d="M1 1 L5.5 5.5 L1 10" fill="none" stroke="#333" stroke-width="1.1"/></svg>
<div style="position:absolute;left:1646px;transform-origin:0 0;transform:scaleX(1.06);top:960.34px;font:12.0px/12.0px 'Liberation Sans',sans-serif;color:#1a1a1a;white-space:pre;-webkit-text-stroke:0.12px #1a1a1a;">Shadows</div>
<svg style="position:absolute;left:1893px;top:961.5px;" width="12" height="6" viewBox="0 0 12 6"><rect x="1.0" y="1.0" width="1.2" height="1.2" fill="#ababab"/><rect x="1.0" y="3.5" width="1.2" height="1.2" fill="#ababab"/><rect x="3.5" y="1.0" width="1.2" height="1.2" fill="#ababab"/><rect x="3.5" y="3.5" width="1.2" height="1.2" fill="#ababab"/><rect x="6.0" y="1.0" width="1.2" height="1.2" fill="#ababab"/><rect x="6.0" y="3.5" width="1.2" height="1.2" fill="#ababab"/><rect x="8.5" y="1.0" width="1.2" height="1.2" fill="#ababab"/><rect x="8.5" y="3.5" width="1.2" height="1.2" fill="#ababab"/></svg>
<div style="position:absolute;left:1624px;top:979px;width:287px;height:24.5px;background:#d9d9d9;border-radius:4px"></div>
<svg style="position:absolute;left:1634px;top:986.5px;" width="7" height="11" viewBox="0 0 7 11"><path d="M1 1 L5.5 5.5 L1 10" fill="none" stroke="#333" stroke-width="1.1"/></svg>
<div style="position:absolute;left:1646px;transform-origin:0 0;transform:scaleX(1.06);top:987.34px;font:12.0px/12.0px 'Liberation Sans',sans-serif;color:#1a1a1a;white-space:pre;-webkit-text-stroke:0.12px #1a1a1a;">Indirect Lighting</div>
<svg style="position:absolute;left:1893px;top:988.5px;" width="12" height="6" viewBox="0 0 12 6"><rect x="1.0" y="1.0" width="1.2" height="1.2" fill="#ababab"/><rect x="1.0" y="3.5" width="1.2" height="1.2" fill="#ababab"/><rect x="3.5" y="1.0" width="1.2" height="1.2" fill="#ababab"/><rect x="3.5" y="3.5" width="1.2" height="1.2" fill="#ababab"/><rect x="6.0" y="1.0" width="1.2" height="1.2" fill="#ababab"/><rect x="6.0" y="3.5" width="1.2" height="1.2" fill="#ababab"/><rect x="8.5" y="1.0" width="1.2" height="1.2" fill="#ababab"/><rect x="8.5" y="3.5" width="1.2" height="1.2" fill="#ababab"/></svg>
<div style="position:absolute;left:1624px;top:1006px;width:287px;height:24.5px;background:#d9d9d9;border-radius:4px"></div>
<svg style="position:absolute;left:1634px;top:1013.5px;" width="7" height="11" viewBox="0 0 7 11"><path d="M1 1 L5.5 5.5 L1 10" fill="none" stroke="#333" stroke-width="1.1"/></svg>
<div style="position:absolute;left:1646px;transform-origin:0 0;transform:scaleX(1.06);top:1014.34px;font:12.0px/12.0px 'Liberation Sans',sans-serif;color:#1a1a1a;white-space:pre;-webkit-text-stroke:0.12px #1a1a1a;">Film</div>
<svg style="position:absolute;left:1893px;top:1015.5px;" width="12" height="6" viewBox="0 0 12 6"><rect x="1.0" y="1.0" width="1.2" height="1.2" fill="#ababab"/><rect x="1.0" y="3.5" width="1.2" height="1.2" fill="#ababab"/><rect x="3.5" y="1.0" width="1.2" height="1.2" fill="#ababab"/><rect x="3.5" y="3.5" width="1.2" height="1.2" fill="#ababab"/><rect x="6.0" y="1.0" width="1.2" height="1.2" fill="#ababab"/><rect x="6.0" y="3.5" width="1.2" height="1.2" fill="#ababab"/><rect x="8.5" y="1.0" width="1.2" height="1.2" fill="#ababab"/><rect x="8.5" y="3.5" width="1.2" height="1.2" fill="#ababab"/></svg>
<div style="position:absolute;left:1624px;top:1033px;width:287px;height:24.5px;background:#d9d9d9;border-radius:4px"></div>
<svg style="position:absolute;left:1634px;top:1040.5px;" width="7" height="11" viewBox="0 0 7 11"><path d="M1 1 L5.5 5.5 L1 10" fill="none" stroke="#333" stroke-width="1.1"/></svg>
<div style="position:absolute;left:1644px;top:1039px;width:14px;height:15px;background:#fff;box-sizing:border-box;border:1px solid #000;border-bottom-width:2px;border-radius:3px"></div>
<div style="position:absolute;left:1661px;transform-origin:0 0;transform:scaleX(1.06);top:1041.34px;font:12.0px/12.0px 'Liberation Sans',sans-serif;color:#1a1a1a;white-space:pre;-webkit-text-stroke:0.12px #1a1a1a;">Simplify</div>
<svg style="position:absolute;left:1893px;top:1042.5px;" width="12" height="6" viewBox="0 0 12 6"><rect x="1.0" y="1.0" width="1.2" height="1.2" fill="#ababab"/><rect x="1.0" y="3.5" width="1.2" height="1.2" fill="#ababab"/><rect x="3.5" y="1.0" width="1.2" height="1.2" fill="#ababab"/><rect x="3.5" y="3.5" width="1.2" height="1.2" fill="#ababab"/><rect x="6.0" y="1.0" width="1.2" height="1.2" fill="#ababab"/><rect x="6.0" y="3.5" width="1.2" height="1.2" fill="#ababab"/><rect x="8.5" y="1.0" width="1.2" height="1.2" fill="#ababab"/><rect x="8.5" y="3.5" width="1.2" height="1.2" fill="#ababab"/></svg>
<div style="position:absolute;left:1624px;top:1060px;width:287px;height:24.5px;background:#d9d9d9;border-radius:4px"></div>
<svg style="position:absolute;left:1634px;top:1067.5px;" width="7" height="11" viewBox="0 0 7 11"><path d="M1 1 L5.5 5.5 L1 10" fill="none" stroke="#333" stroke-width="1.1"/></svg>
<div style="position:absolute;left:1646px;transform-origin:0 0;transform:scaleX(1.06);top:1068.34px;font:12.0px/12.0px 'Liberation Sans',sans-serif;color:#1a1a1a;white-space:pre;-webkit-text-stroke:0.12px #1a1a1a;">Grease Pencil</div>
<svg style="position:absolute;left:1893px;top:1069.5px;" width="12" height="6" viewBox="0 0 12 6"><rect x="1.0" y="1.0" width="1.2" height="1.2" fill="#ababab"/><rect x="1.0" y="3.5" width="1.2" height="1.2" fill="#ababab"/><rect x="3.5" y="1.0" width="1.2" height="1.2" fill="#ababab"/><rect x="3.5" y="3.5" width="1.2" height="1.2" fill="#ababab"/><rect x="6.0" y="1.0" width="1.2" height="1.2" fill="#ababab"/><rect x="6.0" y="3.5" width="1.2" height="1.2" fill="#ababab"/><rect x="8.5" y="1.0" width="1.2" height="1.2" fill="#ababab"/><rect x="8.5" y="3.5" width="1.2" height="1.2" fill="#ababab"/></svg>
<div style="position:absolute;left:1624px;top:1087px;width:287px;height:24.5px;background:#d9d9d9;border-radius:4px"></div>
<svg style="position:absolute;left:1634px;top:1094.5px;" width="7" height="11" viewBox="0 0 7 11"><path d="M1 1 L5.5 5.5 L1 10" fill="none" stroke="#333" stroke-width="1.1"/></svg>
<div style="position:absolute;left:1644px;top:1093px;width:14px;height:15px;background:#fff;box-sizing:border-box;border:1px solid #000;border-bottom-width:2px;border-radius:3px"></div>
<div style="position:absolute;left:1661px;transform-origin:0 0;transform:scaleX(1.06);top:1095.34px;font:12.0px/12.0px 'Liberation Sans',sans-serif;color:#1a1a1a;white-space:pre;-webkit-text-stroke:0.12px #1a1a1a;">Freestyle</div>
<svg style="position:absolute;left:1893px;top:1096.5px;" width="12" height="6" viewBox="0 0 12 6"><rect x="1.0" y="1.0" width="1.2" height="1.2" fill="#ababab"/><rect x="1.0" y="3.5" width="1.2" height="1.2" fill="#ababab"/><rect x="3.5" y="1.0" width="1.2" height="1.2" fill="#ababab"/><rect x="3.5" y="3.5" width="1.2" height="1.2" fill="#ababab"/><rect x="6.0" y="1.0" width="1.2" height="1.2" fill="#ababab"/><rect x="6.0" y="3.5" width="1.2" height="1.2" fill="#ababab"/><rect x="8.5" y="1.0" width="1.2" height="1.2" fill="#ababab"/><rect x="8.5" y="3.5" width="1.2" height="1.2" fill="#ababab"/></svg>
<div style="position:absolute;left:1624px;top:1114px;width:287px;height:24.5px;background:#d9d9d9;border-radius:4px"></div>
<svg style="position:absolute;left:1634px;top:1121.5px;" width="7" height="11" viewBox="0 0 7 11"><path d="M1 1 L5.5 5.5 L1 10" fill="none" stroke="#333" stroke-width="1.1"/></svg>
<div style="position:absolute;left:1646px;transform-origin:0 0;transform:scaleX(1.06);top:1122.34px;font:12.0px/12.0px 'Liberation Sans',sans-serif;color:#1a1a1a;white-space:pre;-webkit-text-stroke:0.12px #1a1a1a;">Color Management</div>
<svg style="position:absolute;left:1893px;top:1123.5px;" width="12" height="6" viewBox="0 0 12 6"><rect x="1.0" y="1.0" width="1.2" height="1.2" fill="#ababab"/><rect x="1.0" y="3.5" width="1.2" height="1.2" fill="#ababab"/><rect x="3.5" y="1.0" width="1.2" height="1.2" fill="#ababab"/><rect x="3.5" y="3.5" width="1.2" height="1.2" fill="#ababab"/><rect x="6.0" y="1.0" width="1.2" height="1.2" fill="#ababab"/><rect x="6.0" y="3.5" width="1.2" height="1.2" fill="#ababab"/><rect x="8.5" y="1.0" width="1.2" height="1.2" fill="#ababab"/><rect x="8.5" y="3.5" width="1.2" height="1.2" fill="#ababab"/></svg>
<svg style="position:absolute;left:12px;top:1183px;" width="11" height="15" viewBox="0 0 11 15"><rect x="0.8" y="0.8" width="9.4" height="13.4" rx="3.5" fill="none" stroke="#000" stroke-width="1"/><path d="M1 6 V4 C1 2,2.5 0.8,5.5 0.8 V6 Z" fill="#000"/></svg>
<div style="position:absolute;left:34px;transform-origin:0 0;transform:scaleX(1.05);top:1185.19px;font:11.0px/11.0px 'Liberation Sans',sans-serif;color:#1a1a1a;white-space:pre;-webkit-text-stroke:0.12px #1a1a1a;">Scrollbar</div>
<svg style="position:absolute;left:223px;top:1183px;" width="11" height="15" viewBox="0 0 11 15"><rect x="0.8" y="0.8" width="9.4" height="13.4" rx="3.5" fill="none" stroke="#000" stroke-width="1"/><rect x="4.5" y="2" width="2" height="4" rx="1" fill="#000"/></svg>
<div style="position:absolute;left:245px;transform-origin:0 0;transform:scaleX(1.05);top:1185.19px;font:11.0px/11.0px 'Liberation Sans',sans-serif;color:#1a1a1a;white-space:pre;-webkit-text-stroke:0.12px #1a1a1a;">Scrollbar</div>
<svg style="position:absolute;left:434px;top:1183px;" width="11" height="15" viewBox="0 0 11 15"><rect x="0.8" y="0.8" width="9.4" height="13.4" rx="3.5" fill="none" stroke="#000" stroke-width="1"/><path d="M5.5 0.8 C8.5 0.8,10 2,10 4 V6 H5.5 Z" fill="#000"/></svg>
<div style="position:absolute;left:456.5px;transform-origin:0 0;transform:scaleX(1.05);top:1185.19px;font:11.0px/11.0px 'Liberation Sans',sans-serif;color:#1a1a1a;white-space:pre;-webkit-text-stroke:0.12px #1a1a1a;">Call Menu</div>
<div style="position:absolute;left:1600.2px;transform-origin:0 0;transform:scaleX(1.05);top:1185.19px;font:11.0px/11.0px 'Liberation Sans',sans-serif;color:#1a1a1a;white-space:pre;-webkit-text-stroke:0.12px #1a1a1a;">Collection 1</div>
<div style="position:absolute;left:1673.3px;transform-origin:0 0;transform:scaleX(1.05);top:1185.19px;font:11.0px/11.0px 'Liberation Sans',sans-serif;color:#1a1a1a;white-space:pre;-webkit-text-stroke:0.12px #1a1a1a;">Verts:0</div>
<div style="position:absolute;left:1720.4px;transform-origin:0 0;transform:scaleX(1.05);top:1185.19px;font:11.0px/11.0px 'Liberation Sans',sans-serif;color:#1a1a1a;white-space:pre;-webkit-text-stroke:0.12px #1a1a1a;">Faces:0</div>
<div style="position:absolute;left:1770.9px;transform-origin:0 0;transform:scaleX(1.05);top:1185.19px;font:11.0px/11.0px 'Liberation Sans',sans-serif;color:#1a1a1a;white-space:pre;-webkit-text-stroke:0.12px #1a1a1a;">Tris:0</div>
<div style="position:absolute;left:1810.3px;transform-origin:0 0;transform:scaleX(1.05);top:1185.19px;font:11.0px/11.0px 'Liberation Sans',sans-serif;color:#1a1a1a;white-space:pre;-webkit-text-stroke:0.12px #1a1a1a;">Objects:0/1</div>
<div style="position:absolute;left:1881.8px;transform-origin:0 0;transform:scaleX(1.05);top:1185.19px;font:11.0px/11.0px 'Liberation Sans',sans-serif;color:#1a1a1a;white-space:pre;-webkit-text-stroke:0.12px #1a1a1a;">4.1.1</div>
<div style="position:absolute;left:1667.5px;top:1184.5px;width:1.2px;height:12.5px;background:#333;"></div>
<div style="position:absolute;left:1714.6px;top:1184.5px;width:1.2px;height:12.5px;background:#333;"></div>
<div style="position:absolute;left:1764.7px;top:1184.5px;width:1.2px;height:12.5px;background:#333;"></div>
<div style="position:absolute;left:1804.3px;top:1184.5px;width:1.2px;height:12.5px;background:#333;"></div>
<div style="position:absolute;left:1875.4px;top:1184.5px;width:1.2px;height:12.5px;background:#333;"></div>
<div style="position:absolute;left:1919px;top:1181px;width:1px;height:19px;background:#a8a8a8;"></div>
<div style="position:absolute;left:0px;top:1181px;width:1px;height:19px;background:#a8a8a8;"></div>
</body></html>
